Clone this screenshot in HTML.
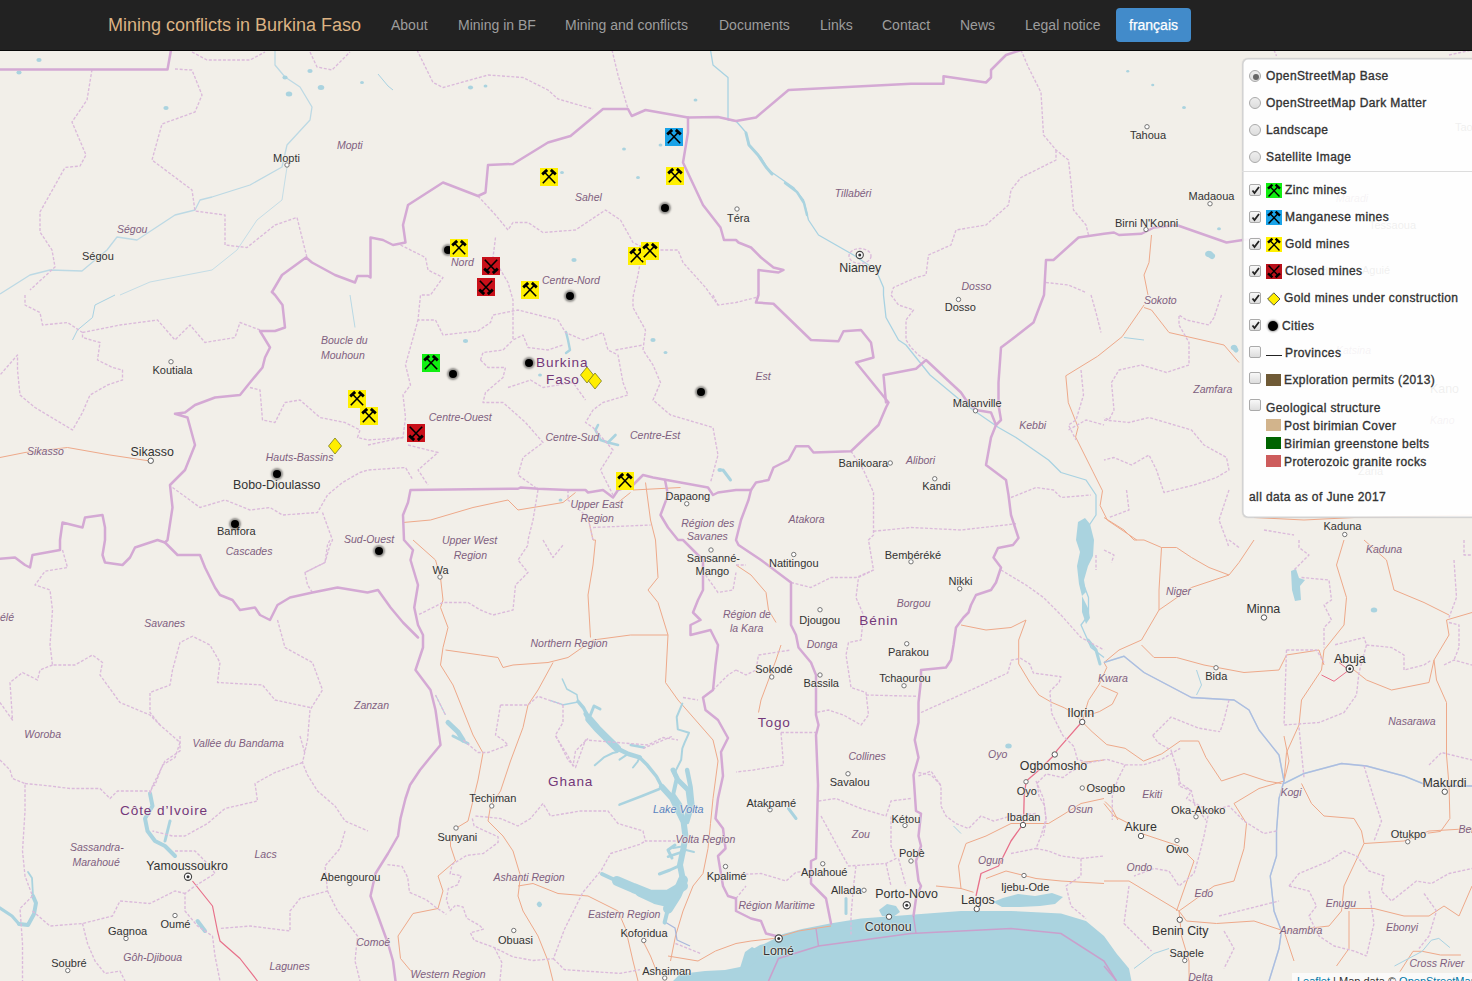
<!DOCTYPE html>
<html><head><meta charset="utf-8">
<style>
*{margin:0;padding:0;box-sizing:border-box}
html,body{width:1472px;height:981px;overflow:hidden;background:#f2efe9;font-family:"Liberation Sans",sans-serif}
#nav{position:absolute;left:0;top:0;width:1472px;height:51px;background:#222;border-bottom:1px solid #080808;z-index:10}
#nav span{position:absolute;top:0;line-height:50px;font-size:14px;color:#9d9d9d;white-space:nowrap}
#nav .brand{font-size:18px;color:#dcb283;left:108px}
#nav .btn{background:#428bca;color:#fff;-webkit-text-stroke:0.25px #fff;top:8px;line-height:34px;height:34px;border-radius:4px;padding:0 13px}
#map{position:absolute;left:0;top:0;width:1472px;height:981px;overflow:hidden}
#map svg{position:absolute;left:0;top:0}
#ctl{position:absolute;left:1242px;top:58px;width:240px;height:459.5px;background:rgba(255,255,255,0.92);border-radius:6px;box-shadow:inset 0 0 0 1.6px rgba(0,0,0,0.17),0 0 1px rgba(0,0,0,0.2);z-index:5;font-size:12px;color:#333}
#ctl .lt{position:absolute;font:12px/16px "Liberation Sans",sans-serif;letter-spacing:0.4px;-webkit-text-stroke:0.35px #333;color:#333;margin-top:0.75px;white-space:nowrap}
#ctl .rb{position:absolute;left:7px;width:12px;height:12px;border-radius:50%;border:1px solid #aaa;background:linear-gradient(#eee,#ddd)}
#ctl .cb{position:absolute;left:7px;width:12px;height:12px;border-radius:2px;border:1px solid #aaa;background:linear-gradient(#f8f8f8,#ddd)}
#ctl .ic{position:absolute;left:24px;width:16px;height:15px}
#map .lb{position:absolute;white-space:nowrap;line-height:16px;text-shadow:0 0 2px #f2efe9,0 0 2px #f2efe9,0 0 1px #f2efe9}
#map .mk{position:absolute}
#map .dot{position:absolute;width:8px;height:8px;border-radius:50%;background:#000;box-shadow:0 0 2px 2px rgba(0,0,0,0.4)}
#attr{position:absolute;left:1292px;top:973px;height:8px;padding:0 5px;background:rgba(255,255,255,0.7);font:11px/16px "Liberation Sans",sans-serif;color:#333;white-space:nowrap;z-index:6;overflow:hidden;width:200px}
</style></head><body>
<svg width="0" height="0" style="position:absolute"><defs>
<g id="hm">
<path d="M4.6 4.2 L15.2 15.3 M13.4 4.2 L2.8 15.3" stroke="#000" stroke-width="1.6" fill="none"/>
<path d="M2.2 6.4 L7.2 1.9 M15.8 6.4 L10.8 1.9" stroke="#000" stroke-width="2.8" stroke-linecap="butt" stroke-linejoin="round" fill="none"/>
</g>
</defs></svg>
<div id="nav">
<span class="brand">Mining conflicts in Burkina Faso</span>
<span style="left:391px">About</span>
<span style="left:458px">Mining in BF</span>
<span style="left:565px">Mining and conflicts</span>
<span style="left:719px">Documents</span>
<span style="left:820px">Links</span>
<span style="left:882px">Contact</span>
<span style="left:960px">News</span>
<span style="left:1025px">Legal notice</span>
<span class="btn" style="left:1116px">français</span>
</div>
<div id="map">
<svg width="1472" height="981" viewBox="0 0 1472 981">
<polygon points="673,981 680,974 705,971 725,970 745,966 749,958 753,949 760,945 764,944 772,940 783,934 802,929 830,923.5 861,918.5 911,914.75 961,911 1011,911 1061,913.5 1086,921 1104,936 1116.5,953.5 1129,968.5 1131.5,981 1131.5,981 673,981" fill="#aad3df"/>
<polyline points="0,457.5 25,452.5 67.5,447.5 110,455 150,461" fill="none" stroke="#eea98a" stroke-width="1.0" stroke-linejoin="round"/>
<polyline points="403,522.5 430.5,520 473,507.5 508,500 518,510 563,502.5 575.5,492.5" fill="none" stroke="#eea98a" stroke-width="1.0" stroke-linejoin="round"/>
<polyline points="645.5,482.5 650.5,520 655.5,540 658,577.5 648,590 658,602.5 668,635 665.5,682.5 678,700 695.5,720 713,740 718,761 713,798.5 710.5,823.5 708,848.5 703,873.5 693,886 683,911 675.5,936 670.5,961" fill="none" stroke="#eea98a" stroke-width="1.0" stroke-linejoin="round"/>
<polyline points="630.5,492.5 618,502.5" fill="none" stroke="#eea98a" stroke-width="1.0" stroke-linejoin="round"/>
<polyline points="633,490 680.5,487.5" fill="none" stroke="#eea98a" stroke-width="1.0" stroke-linejoin="round"/>
<polyline points="588,517.5 593,540 595.5,540 593,565 588,595 590.5,637.5" fill="none" stroke="#eea98a" stroke-width="1.0" stroke-linejoin="round"/>
<polyline points="413,540 435.5,560 440.5,577.5 443,600 440.5,607.5 448,627.5 443,647.5 440.5,665 453,685 463,710 473,735 483,753 478,780 468,821 455.5,828.5" fill="none" stroke="#eea98a" stroke-width="1.0" stroke-linejoin="round"/>
<polyline points="445.5,650 480.5,655 498,657.5 503,667.5 513,665 548,662.5 568,657.5 593,640 630.5,635 668,635" fill="none" stroke="#eea98a" stroke-width="1.0" stroke-linejoin="round"/>
<polyline points="553,662.5 538,690 528,705 523,727.5 510.5,761 500.5,791 490.5,806 488,821 503,836 513,851 520.5,876 518,896 523,911 538,936 548,961 553,981" fill="none" stroke="#eea98a" stroke-width="1.0" stroke-linejoin="round"/>
<polyline points="518,886 533,883.5 558,893.5 588,896 598,901 618,911 625.5,928.5 633,961 638,981" fill="none" stroke="#eea98a" stroke-width="1.0" stroke-linejoin="round"/>
<polyline points="643,941 650.5,956 655.5,968.5" fill="none" stroke="#eea98a" stroke-width="1.0" stroke-linejoin="round"/>
<polyline points="443,891 438,908.5 413,913.5 398,936 400.5,958.5 413,973.5" fill="none" stroke="#eea98a" stroke-width="1.0" stroke-linejoin="round"/>
<polyline points="443,891 438,876 455.5,861 450.5,846 450.5,836" fill="none" stroke="#eea98a" stroke-width="1.0" stroke-linejoin="round"/>
<polyline points="668,956 698,961 715.5,951 736,943.5 751,941 773.5,938.5 798.5,931 831,926" fill="none" stroke="#eea98a" stroke-width="1.0" stroke-linejoin="round"/>
<polyline points="736,565 751,575 766,592.5 768.5,610 776,622.5" fill="none" stroke="#eea98a" stroke-width="1.0" stroke-linejoin="round"/>
<polyline points="781,645 776,660 768.5,680 761,700 758.5,712.5" fill="none" stroke="#eea98a" stroke-width="1.0" stroke-linejoin="round"/>
<polyline points="961,625 986,630 1011,627.5 1026,620 1018.7,640 1018.7,663.9 1029.7,682.2 1038.9,695 1051.7,702.4 1064.6,707.9 1073.8,713.4 1082,721.7" fill="none" stroke="#eea98a" stroke-width="1.0" stroke-linejoin="round"/>
<polyline points="1144.1,304.9 1122.1,336.7 1097.6,356.3 1065.8,375.8 1068.3,402.7 1078.1,427.2 1075.6,437 1092.7,471.2 1102.5,490.8 1100.1,505.5 1107.4,520.2 1136.8,540" fill="none" stroke="#eea98a" stroke-width="1.0" stroke-linejoin="round"/>
<polyline points="1144,307.5 1151.5,310 1169,332.5 1224,345 1239,362.5" fill="none" stroke="#eea98a" stroke-width="1.0" stroke-linejoin="round"/>
<polyline points="1151.5,235 1149,262.5 1144,275 1148,295" fill="none" stroke="#eea98a" stroke-width="1.0" stroke-linejoin="round"/>
<polyline points="1254,517.5 1304,520 1354,517.5 1472,515" fill="none" stroke="#eea98a" stroke-width="1.0" stroke-linejoin="round"/>
<polyline points="1104,517.5 1124,530 1134,540 1144,540 1161.5,547.5 1176.5,547.5 1191.5,557.5 1209,567.5 1229,575 1239,562.5 1254,540" fill="none" stroke="#eea98a" stroke-width="1.0" stroke-linejoin="round"/>
<polyline points="1161.5,547.5 1159,590 1159,610 1141.5,640 1119,650 1104,662.5" fill="none" stroke="#eea98a" stroke-width="1.0" stroke-linejoin="round"/>
<polyline points="1159,610 1191.5,587.5 1229,575" fill="none" stroke="#eea98a" stroke-width="1.0" stroke-linejoin="round"/>
<polyline points="1141.5,645 1154,657.5 1176.5,657.5 1204,665 1244,672.5 1279,670 1286.5,655 1319,650 1324,665" fill="none" stroke="#eea98a" stroke-width="1.0" stroke-linejoin="round"/>
<polyline points="1344,540 1336.5,565 1346.5,597.5 1344,625 1324,650 1321.5,670 1301.5,700 1299,725 1286.5,752.5 1284,781" fill="none" stroke="#eea98a" stroke-width="1.0" stroke-linejoin="round"/>
<polyline points="1354,670 1366.5,680 1391.5,690 1429,682.5 1434,660 1449,635 1446.5,620 1472,612.5" fill="none" stroke="#eea98a" stroke-width="1.0" stroke-linejoin="round"/>
<polyline points="1364,540 1386.5,560 1394,590 1424,602.5 1449,615" fill="none" stroke="#eea98a" stroke-width="1.0" stroke-linejoin="round"/>
<polyline points="1434,660 1436.5,680 1446.5,702.5 1446.5,755 1449,785 1449.9,818.5 1440.6,831.4 1427.7,833.2" fill="none" stroke="#eea98a" stroke-width="1.0" stroke-linejoin="round"/>
<polyline points="1422.2,951.3 1440.6,955 1460.9,955" fill="none" stroke="#eea98a" stroke-width="1.0" stroke-linejoin="round"/>
<polyline points="1400,971.6 1413,951.3 1422.2,951.3" fill="none" stroke="#eea98a" stroke-width="1.0" stroke-linejoin="round"/>
<polyline points="1082,721.7 1092.1,731.7 1106.8,744.6 1125.1,748.3 1143.5,761.1 1161.8,753.8 1180.2,741 1198.5,741 1205.9,757.4 1221.5,781 1244,773.5 1266.5,781 1281.5,783.5" fill="none" stroke="#eea98a" stroke-width="1.0" stroke-linejoin="round"/>
<polyline points="1082,721.7 1088.4,700.6 1099.4,684 1106.8,667.5 1104,662.5" fill="none" stroke="#eea98a" stroke-width="1.0" stroke-linejoin="round"/>
<polyline points="1101.3,685.9 1117.8,693.2 1112.3,704.2 1099.4,711.6 1088.4,715.2" fill="none" stroke="#eea98a" stroke-width="1.0" stroke-linejoin="round"/>
<polyline points="1105,801.5 1112.3,808.8 1117.8,820" fill="none" stroke="#eea98a" stroke-width="1.0" stroke-linejoin="round"/>
<polyline points="1284,781 1259,788.5 1234,803.5 1246.5,823.5 1244,848.5 1234,881 1214,886 1179,911" fill="none" stroke="#eea98a" stroke-width="1.0" stroke-linejoin="round"/>
<polyline points="1284,736 1289,761 1284,781" fill="none" stroke="#eea98a" stroke-width="1.0" stroke-linejoin="round"/>
<polyline points="1301.5,783.5 1311.5,803.5 1324,816 1354,818.5 1361.5,831 1364,843.5 1404,841 1429,831 1472,828.5" fill="none" stroke="#eea98a" stroke-width="1.0" stroke-linejoin="round"/>
<polyline points="1364,843.5 1344,886 1341.5,911 1329,926 1284,931 1254,921 1216.5,923.5 1186.5,921 1179,911 1154,896 1129,881 1104,881" fill="none" stroke="#eea98a" stroke-width="1.0" stroke-linejoin="round"/>
<polyline points="1179,911 1181.5,936 1189,961 1189,981" fill="none" stroke="#eea98a" stroke-width="1.0" stroke-linejoin="round"/>
<polyline points="1176.5,911 1194,861 1179,846 1141.5,833.5" fill="none" stroke="#eea98a" stroke-width="1.0" stroke-linejoin="round"/>
<polyline points="1344,908.5 1374,908.5 1404,916 1429,916 1444,906 1459,916 1472,886" fill="none" stroke="#eea98a" stroke-width="1.0" stroke-linejoin="round"/>
<polyline points="1349,911 1349,948.5 1336.5,966" fill="none" stroke="#eea98a" stroke-width="1.0" stroke-linejoin="round"/>
<polyline points="1284,931 1294,961" fill="none" stroke="#eea98a" stroke-width="1.0" stroke-linejoin="round"/>
<polyline points="1104,803.5 1114,816 1129,823.5" fill="none" stroke="#eea98a" stroke-width="1.0" stroke-linejoin="round"/>
<polyline points="936,886 961,888.5 973.5,892.25" fill="none" stroke="#eea98a" stroke-width="1.0" stroke-linejoin="round"/>
<polyline points="961,888.5 958.5,866 966,843.5 986,836 1011,823.5 1048.5,823.5 1061,816 1081,803.5 1104,798.5" fill="none" stroke="#eea98a" stroke-width="1.0" stroke-linejoin="round"/>
<polyline points="986,878.5 1006,871 1036,878.5 1061,881 1104,883.5" fill="none" stroke="#eea98a" stroke-width="1.0" stroke-linejoin="round"/>
<polyline points="1081,762.5 1104,760" fill="none" stroke="#eea98a" stroke-width="1.0" stroke-linejoin="round"/>
<polyline points="976,896 981,873.5 998.5,866 1006,851 1011,841 1023.5,823.5 1024.2,796 1026.1,781.3 1040.7,768.4 1054.5,754.7 1057.2,750.1 1070.1,735.4 1082,721.7" fill="none" stroke="#e8708a" stroke-width="1.3" stroke-linejoin="round"/>
<polyline points="192.5,881 212.5,906 217.5,931 220,941 240,958.5 257.5,981" fill="none" stroke="#e8708a" stroke-width="1.2" stroke-linejoin="round"/>
<polyline points="1321.5,675 1334,681.25 1349,670 1339,662.5" fill="none" stroke="#e8708a" stroke-width="1.0" stroke-linejoin="round"/>
<polyline points="665,922 675,928 677,940 690,946" fill="none" stroke="#a9b8dc" stroke-width="1.3" stroke-linejoin="round"/>
<polyline points="550,700.3 563.5,704.8 578,702" fill="none" stroke="#a8d2e2" stroke-width="1.4" stroke-linejoin="round"/>
<polyline points="1394.5,966 1422.2,951.3 1431.4,940.2 1438.8,938.4 1449.9,947.6" fill="none" stroke="#a8d2e2" stroke-width="1.0" stroke-linejoin="round"/>
<polyline points="0,294 30,275 50,270 82,271 107,250 117,237 137,240 175,215 195,210 200,200 212,197 250,185 282,167 287,145 310,120 312,107 300,87 285,77 275,65 275,50" fill="none" stroke="#bcd9e4" stroke-width="1.3" stroke-linejoin="round"/>
<polyline points="120,295 150,282 212,270 237,250 257,220 282,200 287,167" fill="none" stroke="#c4dde6" stroke-width="1.0" stroke-linejoin="round"/>
<polyline points="115,295 95,305 92.5,317.5 77.5,330 72.5,340" fill="none" stroke="#a8d2e2" stroke-width="1.0" stroke-linejoin="round"/>
<polyline points="350,295 355,327.5" fill="none" stroke="#a8d2e2" stroke-width="0.8" stroke-linejoin="round"/>
<polyline points="378,74 388,86 393,90" fill="none" stroke="#a8d2e2" stroke-width="1.0" stroke-linejoin="round"/>
<polyline points="710.5,50 713,65 728,77.5 728,100 728,120 736,121 746,132.5 748.5,145 761,157.5 768.5,170 793.5,187.5 803.5,200 808.5,220 818.5,235 836,245 853.5,255 876,270 883.5,287.5 883.5,295 886,317.5 898.5,340 906,345 930,375 966,405 998.5,427.5 1016,437.5 1048.5,460 1061,472.5 1086,480 1096,495 1096,515 1086,530" fill="none" stroke="#a8d2e2" stroke-width="1.3" stroke-linejoin="round"/>
<polyline points="1081,540 1081,577.5 1088.5,597.5 1088.5,615 1081,625 1091,647.5 1104,657.5" fill="none" stroke="#a8d2e2" stroke-width="1.3" stroke-linejoin="round"/>
<polyline points="1104,662.5 1124,656.25 1144,672.5 1191.5,697.5 1234,700 1249,710 1259,730 1279,755 1284,781 1279,798.5 1276.5,831 1276.5,856 1270.25,876 1274,911 1281.5,931 1279,948.5 1269,981" fill="none" stroke="#a8d2e2" stroke-width="1.4" stroke-linejoin="round"/>
<polyline points="1284,783.5 1304,773.5 1341.5,763.5 1366.5,766 1404,776 1429,786 1472,786" fill="none" stroke="#a8d2e2" stroke-width="1.4" stroke-linejoin="round"/>
<polyline points="1196.5,670 1201.5,685 1196.5,695" fill="none" stroke="#a8d2e2" stroke-width="1.0" stroke-linejoin="round"/>
<polyline points="1134,968.5 1154,953.5 1169,948.5" fill="none" stroke="#a8d2e2" stroke-width="1.0" stroke-linejoin="round"/>
<polyline points="1124,337.5 1144,340" fill="none" stroke="#a8d2e2" stroke-width="1.0" stroke-linejoin="round"/>
<polyline points="953.5,826 961,833.5" fill="none" stroke="#a8d2e2" stroke-width="1.0" stroke-linejoin="round"/>
<polyline points="435.5,695 445.5,715" fill="none" stroke="#a8d2e2" stroke-width="1.0" stroke-linejoin="round"/>
<polyline points="673.2,770 676.7,778.7 673.2,794.3 680.2,804.7 683.6,822" fill="none" stroke="#aad3df" stroke-width="4" stroke-linejoin="round" stroke-linecap="round"/>
<polyline points="687.1,770 690.6,787.3 692.3,804.7 687.1,822" fill="none" stroke="#aad3df" stroke-width="4.5" stroke-linejoin="round" stroke-linecap="round"/>
<polyline points="659.4,874 670,870 680.2,865.4" fill="none" stroke="#aad3df" stroke-width="3" stroke-linejoin="round" stroke-linecap="round"/>
<polyline points="668,856.7 676,854 683.6,851.5" fill="none" stroke="#aad3df" stroke-width="2.5" stroke-linejoin="round" stroke-linecap="round"/>
<polyline points="673.2,848 683.6,846.3" fill="none" stroke="#aad3df" stroke-width="2" stroke-linejoin="round" stroke-linecap="round"/>
<polyline points="686,850 694,852" fill="none" stroke="#aad3df" stroke-width="2" stroke-linejoin="round" stroke-linecap="round"/>
<polyline points="633,767.5 637.4,762 639.7,757.4" fill="none" stroke="#aad3df" stroke-width="2" stroke-linejoin="round" stroke-linecap="round"/>
<polyline points="619.5,759.7 626.2,755.2" fill="none" stroke="#aad3df" stroke-width="2" stroke-linejoin="round" stroke-linecap="round"/>
<polyline points="640,893 655,900 668,903" fill="none" stroke="#aad3df" stroke-width="8" stroke-linejoin="round" stroke-linecap="round"/>
<polyline points="1088,640 1096,650 1100,664" fill="none" stroke="#aad3df" stroke-width="3" stroke-linejoin="round" stroke-linecap="round"/>
<polyline points="562.3,679 566.8,689 576.9,694.7 578,701.4" fill="none" stroke="#aad3df" stroke-width="1.5" stroke-linejoin="round" stroke-linecap="round"/>
<polyline points="578,701.4 583.6,708 589.2,719.3" fill="none" stroke="#aad3df" stroke-width="3.5" stroke-linejoin="round" stroke-linecap="round"/>
<polyline points="589.2,719.3 597,728.3 606,737.3 617.3,748.5" fill="none" stroke="#aad3df" stroke-width="7.5" stroke-linejoin="round" stroke-linecap="round"/>
<polyline points="586,714 589.2,719.3" fill="none" stroke="#aad3df" stroke-width="5" stroke-linejoin="round" stroke-linecap="round"/>
<polyline points="617.3,748.5 628.5,754 639.7,757.4" fill="none" stroke="#aad3df" stroke-width="4.5" stroke-linejoin="round" stroke-linecap="round"/>
<polyline points="639.7,757.4 647.5,765.3 656.5,776.5 662,787 670,795" fill="none" stroke="#aad3df" stroke-width="3.5" stroke-linejoin="round" stroke-linecap="round"/>
<polyline points="673,770 678,780 688,790 690,805 685,822" fill="none" stroke="#aad3df" stroke-width="5" stroke-linejoin="round" stroke-linecap="round"/>
<polyline points="662,787 672,798 683.6,822 685.4,836 683.6,848 680,865 683,880" fill="none" stroke="#aad3df" stroke-width="6" stroke-linejoin="round" stroke-linecap="round"/>
<polyline points="675,845 668,850 672,858" fill="none" stroke="#aad3df" stroke-width="3" stroke-linejoin="round" stroke-linecap="round"/>
<polyline points="683,880 676.7,894.8 668,908.7" fill="none" stroke="#aad3df" stroke-width="10" stroke-linejoin="round" stroke-linecap="round"/>
<polyline points="668,908.7 664.6,922.6" fill="none" stroke="#aad3df" stroke-width="4" stroke-linejoin="round" stroke-linecap="round"/>
<polyline points="602,874 617,881" fill="none" stroke="#aad3df" stroke-width="4" stroke-linejoin="round" stroke-linecap="round"/>
<polyline points="617,881 633.4,888 650.7,894.8 668,894.8 683,886" fill="none" stroke="#aad3df" stroke-width="10" stroke-linejoin="round" stroke-linecap="round"/>
<polyline points="590,716 594,706 600,709" fill="none" stroke="#aad3df" stroke-width="3" stroke-linejoin="round" stroke-linecap="round"/>
<polyline points="594.8,765.3 603.8,757.4 612.8,753 617.3,752" fill="none" stroke="#aad3df" stroke-width="2" stroke-linejoin="round" stroke-linecap="round"/>
<polyline points="630.7,745 644.2,747.4" fill="none" stroke="#aad3df" stroke-width="2.5" stroke-linejoin="round" stroke-linecap="round"/>
<polyline points="619.5,804.7 642,796 659.4,789" fill="none" stroke="#aad3df" stroke-width="2.5" stroke-linejoin="round" stroke-linecap="round"/>
<polyline points="682.3,703.6 676.7,717 677.8,729.4 689,732.8 684.5,742.9 682.3,748.5 681.2,759.7 675.6,770.9 676.7,780" fill="none" stroke="#aad3df" stroke-width="2" stroke-linejoin="round" stroke-linecap="round"/>
<polyline points="448,722.5 458,732 463,740" fill="none" stroke="#aad3df" stroke-width="5" stroke-linejoin="round" stroke-linecap="round"/>
<polyline points="453,736 468,743.5" fill="none" stroke="#aad3df" stroke-width="3" stroke-linejoin="round" stroke-linecap="round"/>
<polyline points="150,793.5 152.5,806 145,818.5 147.5,831 155,841 165,846 175,856" fill="none" stroke="#aad3df" stroke-width="4" stroke-linejoin="round" stroke-linecap="round"/>
<polyline points="170,821 165,841" fill="none" stroke="#aad3df" stroke-width="3" stroke-linejoin="round" stroke-linecap="round"/>
<polyline points="0,908 12,916 19,924" fill="none" stroke="#aad3df" stroke-width="3.2" stroke-linejoin="round" stroke-linecap="round"/>
<polyline points="19,924 28,925 34,914 36,903 33,896" fill="none" stroke="#aad3df" stroke-width="4" stroke-linejoin="round" stroke-linecap="round"/>
<polyline points="33,896 32,878 28,872" fill="none" stroke="#aad3df" stroke-width="1.8" stroke-linejoin="round" stroke-linecap="round"/>
<polyline points="197.5,921 205,931" fill="none" stroke="#aad3df" stroke-width="4" stroke-linejoin="round" stroke-linecap="round"/>
<polyline points="598,425 595.5,430 600.5,440 608,442.5 615.5,435" fill="none" stroke="#aad3df" stroke-width="2.6" stroke-linejoin="round" stroke-linecap="round"/>
<polyline points="608,442.5 618,445" fill="none" stroke="#aad3df" stroke-width="2.6" stroke-linejoin="round" stroke-linecap="round"/>
<polyline points="566,332 568,340 570,350 566,353" fill="none" stroke="#aad3df" stroke-width="2.4" stroke-linejoin="round" stroke-linecap="round"/>
<polyline points="723,470 730.5,480" fill="none" stroke="#aad3df" stroke-width="3" stroke-linejoin="round" stroke-linecap="round"/>
<polyline points="746,133 749,145 758,155 766,167 772,174" fill="none" stroke="#aad3df" stroke-width="3" stroke-linejoin="round" stroke-linecap="round"/>
<polyline points="785,183 797,192 804,203 807,215" fill="none" stroke="#aad3df" stroke-width="2.5" stroke-linejoin="round" stroke-linecap="round"/>
<polyline points="846,898.5 846,913.5" fill="none" stroke="#aad3df" stroke-width="3" stroke-linejoin="round" stroke-linecap="round"/>
<polyline points="788.5,808.5 796,818.5" fill="none" stroke="#aad3df" stroke-width="3" stroke-linejoin="round" stroke-linecap="round"/>
<polyline points="1209,254 1212,256" fill="none" stroke="#aad3df" stroke-width="6" stroke-linejoin="round" stroke-linecap="round"/>
<polyline points="1234,347.5 1236,350" fill="none" stroke="#aad3df" stroke-width="5" stroke-linejoin="round" stroke-linecap="round"/>
<polyline points="539.25,904.25 539.5,904.5" fill="none" stroke="#aad3df" stroke-width="5" stroke-linejoin="round" stroke-linecap="round"/>
<polygon points="1078,522 1085,518 1090,524 1094,540 1093,556 1088,566 1084,580 1086,592 1082,596 1079,584 1077,566 1080,552 1076,540" fill="#aad3df"/>
<polygon points="1291,571 1296,569 1299,578 1305,580 1300,586 1301,600 1295,601 1292,590" fill="#aad3df"/>
<polygon points="1082,596 1088,608 1090,618 1086,624 1082,612" fill="#aad3df"/>
<polygon points="993,902 1003,898 1018,894 1035,896 1052,893 1063,897 1055,904 1040,906 1020,907 1002,907" fill="#aad3df"/>
<polygon points="879,910 887,904 896,906 900,912 893,917 882,916" fill="#aad3df"/>
<polygon points="740,968 745,952 752,947 758,950 756,962 748,968" fill="#aad3df"/>
<polyline points="1104,662.5 1124,656.25 1144,672.5 1191.5,697.5 1234,700 1249,710 1259,730 1279,755 1284,781 1279,798.5 1276.5,831 1276.5,856 1270.25,876 1274,911 1281.5,931 1279,948.5 1269,981" fill="none" stroke="#b0aee0" stroke-width="1.3" stroke-opacity="0.6"/>
<polyline points="1284,783.5 1304,773.5 1341.5,763.5 1366.5,766 1404,776 1429,786 1472,786" fill="none" stroke="#b0aee0" stroke-width="1.3" stroke-opacity="0.6"/>
<ellipse cx="289" cy="94" rx="3.25" ry="2.5" fill="#aad3df"/>
<ellipse cx="321" cy="87.5" rx="3.25" ry="2.5" fill="#aad3df"/>
<ellipse cx="39" cy="60" rx="2.6" ry="2" fill="#aad3df"/>
<ellipse cx="19" cy="72.5" rx="2.6" ry="2" fill="#aad3df"/>
<ellipse cx="166" cy="108" rx="2.6" ry="2" fill="#aad3df"/>
<ellipse cx="285" cy="77.5" rx="2.6" ry="2" fill="#aad3df"/>
<ellipse cx="310" cy="71" rx="2.6" ry="2" fill="#aad3df"/>
<ellipse cx="362" cy="82.5" rx="1.9500000000000002" ry="1.5" fill="#aad3df"/>
<ellipse cx="470.5" cy="87.5" rx="2.6" ry="2" fill="#aad3df"/>
<ellipse cx="485.5" cy="86" rx="1.9500000000000002" ry="1.5" fill="#aad3df"/>
<ellipse cx="562" cy="172.5" rx="1.9500000000000002" ry="1.5" fill="#aad3df"/>
<ellipse cx="624" cy="149" rx="1.9500000000000002" ry="1.5" fill="#aad3df"/>
<ellipse cx="660.5" cy="145" rx="1.9500000000000002" ry="1.5" fill="#aad3df"/>
<ellipse cx="638" cy="177.5" rx="1.9500000000000002" ry="1.5" fill="#aad3df"/>
<ellipse cx="695.5" cy="100" rx="1.9500000000000002" ry="1.5" fill="#aad3df"/>
<ellipse cx="465.5" cy="341" rx="2.6" ry="2" fill="#aad3df"/>
<ellipse cx="653" cy="340" rx="2.6" ry="2" fill="#aad3df"/>
<ellipse cx="665.5" cy="352.5" rx="1.9500000000000002" ry="1.5" fill="#aad3df"/>
<ellipse cx="560.5" cy="500" rx="1.9500000000000002" ry="1.5" fill="#aad3df"/>
<ellipse cx="1374" cy="610" rx="3.25" ry="2.5" fill="#aad3df"/>
<ellipse cx="1008.5" cy="746" rx="3.25" ry="2.5" fill="#aad3df"/>
<ellipse cx="1209" cy="254" rx="3.9000000000000004" ry="3" fill="#aad3df"/>
<ellipse cx="1234" cy="347.5" rx="3.25" ry="2.5" fill="#aad3df"/>
<ellipse cx="574" cy="260" rx="2.6" ry="2" fill="#aad3df"/>
<ellipse cx="540" cy="375" rx="1.9500000000000002" ry="1.5" fill="#aad3df"/>
<ellipse cx="720" cy="470" rx="2.6" ry="2" fill="#aad3df"/>
<ellipse cx="1127.75" cy="71.25" rx="1.56" ry="1.2" fill="#aad3df"/>
<ellipse cx="1152.75" cy="85" rx="1.56" ry="1.2" fill="#aad3df"/>
<ellipse cx="1184" cy="107.5" rx="1.9500000000000002" ry="1.5" fill="#aad3df"/>
<ellipse cx="1219" cy="228.75" rx="1.9500000000000002" ry="1.5" fill="#aad3df"/>
<polyline points="472.3,818.5 474.1,825.8 498.1,836.9 498.1,842.4 483.3,853.5 466.7,855.4 452,864.6 450.1,873.8 461.2,875.6 457.5,884.9 448.3,888.6 446.4,899.6 450.1,910.7 455.6,905.2 463,907 466.7,918.1 479.6,925.5 483.3,929.2 470.4,932.8 474.1,940.2 494.4,947.6 512.8,956.8 533.1,960.5 553.4,958.7 564.5,929.2 582.9,892.3 601.4,870.1 610.6,853.5 640,844.3 645.5,841" fill="none" stroke="#dbbadb" stroke-width="1.35" stroke-dasharray="3 1.7" stroke-linejoin="round"/>
<polyline points="494.4,947.6 501.8,962.4 499.9,981" fill="none" stroke="#dbbadb" stroke-width="1.35" stroke-dasharray="3 1.7" stroke-linejoin="round"/>
<polyline points="553.4,958.7 564.5,969.7 619.9,973.4 640,969.7" fill="none" stroke="#dbbadb" stroke-width="1.35" stroke-dasharray="3 1.7" stroke-linejoin="round"/>
<polyline points="387.4,864.6 402.1,866.4 407.7,877.5 409.5,892.3 426.1,899.6 435.4,907 446.4,914.4" fill="none" stroke="#dbbadb" stroke-width="1.35" stroke-dasharray="3 1.7" stroke-linejoin="round"/>
<polyline points="175,69 192,70 202,95 195,112 162,124 152,160 192,190 195,211 225,215 225,245 247,247.5 275,225 297,217.5 307,257.5" fill="none" stroke="#dbbadb" stroke-width="1.35" stroke-dasharray="3 1.7" stroke-linejoin="round"/>
<polyline points="192,52 207,60 250,60 265,52" fill="none" stroke="#dbbadb" stroke-width="1.35" stroke-dasharray="3 1.7" stroke-linejoin="round"/>
<polyline points="92,69.5 87,100 72,122 86,155 80,166 65,167.5 40,212 40,232 52,250 55,267 30,290" fill="none" stroke="#dbbadb" stroke-width="1.35" stroke-dasharray="3 1.7" stroke-linejoin="round"/>
<polyline points="310,52 317,67 332,70 350,52" fill="none" stroke="#dbbadb" stroke-width="1.35" stroke-dasharray="3 1.7" stroke-linejoin="round"/>
<polyline points="417,50 433,82.5 443,87.5 488,75 523,77.5 548,90 558,99 593,109" fill="none" stroke="#dbbadb" stroke-width="1.35" stroke-dasharray="3 1.7" stroke-linejoin="round"/>
<polyline points="612,50 618,75 628,109" fill="none" stroke="#dbbadb" stroke-width="1.35" stroke-dasharray="3 1.7" stroke-linejoin="round"/>
<polyline points="478,196 495.5,215 508,230 513,222.5 528,222.5 543,232.5 575.5,230 605.5,210 620.5,220 633,242.5 643,247.5 638,275 633,297 633,307.5 645.5,330 643,350 653,365 660.5,382.5 653,400 670.5,415 713,427.5 718,455 710.5,482.5" fill="none" stroke="#dbbadb" stroke-width="1.35" stroke-dasharray="3 1.7" stroke-linejoin="round"/>
<polyline points="660.5,250 678,250 683,262.5 705.5,287.5 718,305 736,302.5 756,297.5" fill="none" stroke="#dbbadb" stroke-width="1.35" stroke-dasharray="3 1.7" stroke-linejoin="round"/>
<polyline points="400.5,245 425.5,257.5 428,270 443,277.5 430.5,295 420.5,295 418,320 435.5,320 443,335 478,331 490.5,322.5 493,315 518,310 558,320 565.5,332.5 583,340 603,332.5 608,350 618,355 623,382.5 628,395 603,402.5 593,410 585.5,422.5 593,427.5 613,450 600.5,470 613,495" fill="none" stroke="#dbbadb" stroke-width="1.35" stroke-dasharray="3 1.7" stroke-linejoin="round"/>
<polyline points="495.5,237.5 493,257.5 508,282.5 513,300 513,340 523,335 528,347.5 548,350 563,345" fill="none" stroke="#dbbadb" stroke-width="1.35" stroke-dasharray="3 1.7" stroke-linejoin="round"/>
<polyline points="25,295 25,305 40,312.5 42.5,325 67.5,322.5 82.5,332.5 82.5,337.5 100,342.5 97.5,360 112.5,367.5 122.5,370 122.5,380 107.5,385 90,395 82.5,412.5 72.5,430 35,407.5 20,395 17.5,370 17.5,355 0,375" fill="none" stroke="#dbbadb" stroke-width="1.35" stroke-dasharray="3 1.7" stroke-linejoin="round"/>
<polyline points="82.5,332.5 120,325 157.5,320 175,340 190,325 205,342.5 235,337.5 240,322.5 260,330" fill="none" stroke="#dbbadb" stroke-width="1.35" stroke-dasharray="3 1.7" stroke-linejoin="round"/>
<polyline points="250,387.5 260,390 262.5,420 275,422.5 285,402.5 300,400 320,417.5 345,422.5 360,430 357.5,437.5 368,440 403,437.5 405.5,417.5 403,395 410.5,385 405.5,365 418,320" fill="none" stroke="#dbbadb" stroke-width="1.35" stroke-dasharray="3 1.7" stroke-linejoin="round"/>
<polyline points="172.5,487.5 200,507.5 225,500 250,510 270,507.5 282.5,515 317.5,512.5 327.5,495 342.5,482.5 360,472.5 368,470 405.5,467.5 413,480" fill="none" stroke="#dbbadb" stroke-width="1.35" stroke-dasharray="3 1.7" stroke-linejoin="round"/>
<polyline points="322.5,512.5 332.5,540 330,545 325,562.5 305,572.5 307.5,585 312.5,592.5" fill="none" stroke="#dbbadb" stroke-width="1.35" stroke-dasharray="3 1.7" stroke-linejoin="round"/>
<polyline points="368,445 403,437.5" fill="none" stroke="#dbbadb" stroke-width="1.35" stroke-dasharray="3 1.7" stroke-linejoin="round"/>
<polyline points="408,445 438,452.5 418,470 428,485" fill="none" stroke="#dbbadb" stroke-width="1.35" stroke-dasharray="3 1.7" stroke-linejoin="round"/>
<polyline points="480.5,360 483,352.5 503,350 513,340" fill="none" stroke="#dbbadb" stroke-width="1.35" stroke-dasharray="3 1.7" stroke-linejoin="round"/>
<polyline points="480.5,360 488,367.5 505.5,367.5 503,377.5 485.5,392.5 483,402.5 503,402.5 525.5,422.5 543,442.5 523,457.5 518,475 535.5,487.5" fill="none" stroke="#dbbadb" stroke-width="1.35" stroke-dasharray="3 1.7" stroke-linejoin="round"/>
<polyline points="508,387.5 530.5,380 543,387.5 573,382.5 585.5,400" fill="none" stroke="#dbbadb" stroke-width="1.35" stroke-dasharray="3 1.7" stroke-linejoin="round"/>
<polyline points="615.5,350 643,345" fill="none" stroke="#dbbadb" stroke-width="1.35" stroke-dasharray="3 1.7" stroke-linejoin="round"/>
<polyline points="713,295 718,305" fill="none" stroke="#dbbadb" stroke-width="1.35" stroke-dasharray="3 1.7" stroke-linejoin="round"/>
<polyline points="538,490 533,520 528,540 528,545 518,560 528,572.5 515.5,585 513,610 493,615 480.5,610 468,602.5 443,602.5 418,615" fill="none" stroke="#dbbadb" stroke-width="1.35" stroke-dasharray="3 1.7" stroke-linejoin="round"/>
<polyline points="568,490 568,500 588,517.5 593,540" fill="none" stroke="#dbbadb" stroke-width="1.35" stroke-dasharray="3 1.7" stroke-linejoin="round"/>
<polyline points="593,527.5 650.5,525" fill="none" stroke="#dbbadb" stroke-width="1.35" stroke-dasharray="3 1.7" stroke-linejoin="round"/>
<polyline points="543,540 553,557.5 563,545" fill="none" stroke="#dbbadb" stroke-width="1.35" stroke-dasharray="3 1.7" stroke-linejoin="round"/>
<polyline points="891,295 898.5,305 913.5,310 906,320 906,340 911,347.5 918.5,355 926,360" fill="none" stroke="#dbbadb" stroke-width="1.35" stroke-dasharray="3 1.7" stroke-linejoin="round"/>
<polyline points="851,451.25 863.5,470 873.5,492.5 873.5,535 868.5,540 873.5,570 858.5,577.5 856,597.5 863.5,615 861,640 848.5,642.5 846,655 851,687.5 866,692.5 868.5,715 861,725 843.5,715 828.5,710 816,712.5" fill="none" stroke="#dbbadb" stroke-width="1.35" stroke-dasharray="3 1.7" stroke-linejoin="round"/>
<polyline points="873.5,531.25 911,527.5 961,530 1016,523.75" fill="none" stroke="#dbbadb" stroke-width="1.35" stroke-dasharray="3 1.7" stroke-linejoin="round"/>
<polyline points="1011,497.5 1036,487.5 1053.5,490 1061,497.5 1091,495" fill="none" stroke="#dbbadb" stroke-width="1.35" stroke-dasharray="3 1.7" stroke-linejoin="round"/>
<polyline points="1068.5,430 1086,420 1104,425" fill="none" stroke="#dbbadb" stroke-width="1.35" stroke-dasharray="3 1.7" stroke-linejoin="round"/>
<polyline points="1081,370 1083.5,395 1076,420 1068.5,425 1076,440" fill="none" stroke="#dbbadb" stroke-width="1.35" stroke-dasharray="3 1.7" stroke-linejoin="round"/>
<polyline points="1091,295 1096,312.5 1101,332.5" fill="none" stroke="#dbbadb" stroke-width="1.35" stroke-dasharray="3 1.7" stroke-linejoin="round"/>
<polyline points="1021,50 1028.5,67.5 1041,92.5 1043.5,135 1056,150 1068.5,160 1071,182.5 1073.5,210 1086,225 1088.5,235" fill="none" stroke="#dbbadb" stroke-width="1.35" stroke-dasharray="3 1.7" stroke-linejoin="round"/>
<polyline points="1056,150 1056,160 1021,177.5 1011,190 1008.5,205 986,225 956,230 951,245 928.5,255 926,275 916,277.5 893.5,287.5 891,295" fill="none" stroke="#dbbadb" stroke-width="1.35" stroke-dasharray="3 1.7" stroke-linejoin="round"/>
<polyline points="1046,282.5 1068.5,285 1086,292.5" fill="none" stroke="#dbbadb" stroke-width="1.35" stroke-dasharray="3 1.7" stroke-linejoin="round"/>
<polyline points="1221.5,295 1214,317.5 1209,325 1186.5,320 1179,315 1179,325 1189,342.5 1189,365 1166.5,372.5 1141.5,365 1119,370 1111.5,382.5 1114,410 1109,420 1104,417.5" fill="none" stroke="#dbbadb" stroke-width="1.35" stroke-dasharray="3 1.7" stroke-linejoin="round"/>
<polyline points="1104,420 1129,422.5 1149,417.5 1191.5,430 1204,445 1226.5,457.5 1229,470 1216.5,477.5 1194,485 1164,492.5 1156.5,470 1149,455 1131.5,465 1114,457.5 1104,460" fill="none" stroke="#dbbadb" stroke-width="1.35" stroke-dasharray="3 1.7" stroke-linejoin="round"/>
<polyline points="1126.5,490 1129,510 1109,517.5" fill="none" stroke="#dbbadb" stroke-width="1.35" stroke-dasharray="3 1.7" stroke-linejoin="round"/>
<polyline points="1229,490 1219,520 1226.5,540 1229,547.5" fill="none" stroke="#dbbadb" stroke-width="1.35" stroke-dasharray="3 1.7" stroke-linejoin="round"/>
<polyline points="1264,530 1294,535" fill="none" stroke="#dbbadb" stroke-width="1.35" stroke-dasharray="3 1.7" stroke-linejoin="round"/>
<polyline points="1274,50 1276.5,56" fill="none" stroke="#dbbadb" stroke-width="1.35" stroke-dasharray="3 1.7" stroke-linejoin="round"/>
<polyline points="62.5,550 67.5,567.5 45,571.25 35,585 50,590 52.5,610 50,645 52.5,665 75,665 92.5,655 102.5,662.5 100,675 120,702.5 150,715 160,725 180,742.5 175,757.5 162.5,765 155,785 152.5,786 150,793.5" fill="none" stroke="#dbbadb" stroke-width="1.35" stroke-dasharray="3 1.7" stroke-linejoin="round"/>
<polyline points="52.5,665 40,670 37.5,680 22.5,672.5 10,682.5 12.5,720 0,702.5" fill="none" stroke="#dbbadb" stroke-width="1.35" stroke-dasharray="3 1.7" stroke-linejoin="round"/>
<polyline points="277.5,620 285,647.5 312.5,662.5 322.5,690 310,710 307.5,740 302.5,762.5 307.5,775 317.5,791 335,806 345,821 368,831" fill="none" stroke="#dbbadb" stroke-width="1.35" stroke-dasharray="3 1.7" stroke-linejoin="round"/>
<polyline points="310,707.5 275,700 262.5,685 217.5,682.5 220,662.5 210,645 192.5,636.25 180,642.5 172.5,670 170,685 150,692.5 150,712.5 160,725" fill="none" stroke="#dbbadb" stroke-width="1.35" stroke-dasharray="3 1.7" stroke-linejoin="round"/>
<polyline points="302.5,762.5 275,772.5 255,783.5 257.5,801 225,808.5 207.5,823.5 185,836 172.5,836 152.5,831" fill="none" stroke="#dbbadb" stroke-width="1.35" stroke-dasharray="3 1.7" stroke-linejoin="round"/>
<polyline points="305,572.5 325,562.5 327.5,545 330,540" fill="none" stroke="#dbbadb" stroke-width="1.35" stroke-dasharray="3 1.7" stroke-linejoin="round"/>
<polyline points="0,760 10,770 12.5,778.5 25,783.5 25,811 22.5,851 25,876 32.5,896 20,908.5 22.5,943.5 22.5,981" fill="none" stroke="#dbbadb" stroke-width="1.35" stroke-dasharray="3 1.7" stroke-linejoin="round"/>
<polyline points="500.5,705 528,705 538,696.25 563,705" fill="none" stroke="#dbbadb" stroke-width="1.35" stroke-dasharray="3 1.7" stroke-linejoin="round"/>
<polyline points="500.5,705 495.5,735 503,740 508,745 488,752.5 478,752.5 463,740" fill="none" stroke="#dbbadb" stroke-width="1.35" stroke-dasharray="3 1.7" stroke-linejoin="round"/>
<polyline points="563,705 563,722.5 555.5,735 568,760 575.5,767.5 585.5,740 648,745 663,737.5 678,740" fill="none" stroke="#dbbadb" stroke-width="1.35" stroke-dasharray="3 1.7" stroke-linejoin="round"/>
<polyline points="683,697.5 698,700" fill="none" stroke="#dbbadb" stroke-width="1.35" stroke-dasharray="3 1.7" stroke-linejoin="round"/>
<polyline points="705.5,575 718,592.5 733,590 736,572.5" fill="none" stroke="#dbbadb" stroke-width="1.35" stroke-dasharray="3 1.7" stroke-linejoin="round"/>
<polyline points="713,690 728,675 736,670" fill="none" stroke="#dbbadb" stroke-width="1.35" stroke-dasharray="3 1.7" stroke-linejoin="round"/>
<polyline points="435.5,695 445.5,715" fill="none" stroke="#dbbadb" stroke-width="1.35" stroke-dasharray="3 1.7" stroke-linejoin="round"/>
<polyline points="791,582.5 811,587.5 831,577.5 856,577.5 873.5,570" fill="none" stroke="#dbbadb" stroke-width="1.35" stroke-dasharray="3 1.7" stroke-linejoin="round"/>
<polyline points="866,695 916,696.25" fill="none" stroke="#dbbadb" stroke-width="1.35" stroke-dasharray="3 1.7" stroke-linejoin="round"/>
<polyline points="921,712.5 960,695 1007.7,673 1011.4,660.2 1020.6,658.3 1029.7,663.9 1033.4,673 1060.9,676.7 1059.1,682.2 1049.9,691.4 1051.7,713.4 1062.8,735.4 1073.8,746.4 1077.4,759.3 1088.4,762.9 1106.8,759.3 1125.1,764.8 1143.5,764.8 1161.8,759.3 1171,753.8 1180.2,748.3" fill="none" stroke="#dbbadb" stroke-width="1.35" stroke-dasharray="3 1.7" stroke-linejoin="round"/>
<polyline points="1152.7,735.4 1171,717.1 1198.5,728.1 1220,731.7" fill="none" stroke="#dbbadb" stroke-width="1.35" stroke-dasharray="3 1.7" stroke-linejoin="round"/>
<polyline points="1152.7,735.4 1158.2,742.8 1171,750.1 1176.5,768.4 1180.2,783.1 1191.2,790.5 1194.8,805.1 1205.9,820" fill="none" stroke="#dbbadb" stroke-width="1.35" stroke-dasharray="3 1.7" stroke-linejoin="round"/>
<polyline points="1088.4,762.9 1070.1,772.1 1062.8,777.6 1046.2,774 1037.1,783.1 1038.9,796 1044.4,805.1 1046.2,820 1043.5,836" fill="none" stroke="#dbbadb" stroke-width="1.35" stroke-dasharray="3 1.7" stroke-linejoin="round"/>
<polyline points="1125.1,764.8 1117.8,779.4 1112.3,796 1112.3,820" fill="none" stroke="#dbbadb" stroke-width="1.35" stroke-dasharray="3 1.7" stroke-linejoin="round"/>
<polyline points="1001,570 1026,585 1043.5,597.5 1061,615 1081,637.5 1104,650" fill="none" stroke="#dbbadb" stroke-width="1.35" stroke-dasharray="3 1.7" stroke-linejoin="round"/>
<polyline points="1096,555 1096,570" fill="none" stroke="#dbbadb" stroke-width="1.35" stroke-dasharray="3 1.7" stroke-linejoin="round"/>
<polyline points="736,565 746,565" fill="none" stroke="#dbbadb" stroke-width="1.35" stroke-dasharray="3 1.7" stroke-linejoin="round"/>
<polyline points="758.5,655 791,650" fill="none" stroke="#dbbadb" stroke-width="1.35" stroke-dasharray="3 1.7" stroke-linejoin="round"/>
<polyline points="736,670 746,675 756,670 758.5,655" fill="none" stroke="#dbbadb" stroke-width="1.35" stroke-dasharray="3 1.7" stroke-linejoin="round"/>
<polyline points="781,732.5 816,732.5" fill="none" stroke="#dbbadb" stroke-width="1.35" stroke-dasharray="3 1.7" stroke-linejoin="round"/>
<polyline points="781,732.5 783.5,765 753.5,770 736,772" fill="none" stroke="#dbbadb" stroke-width="1.35" stroke-dasharray="3 1.7" stroke-linejoin="round"/>
<polyline points="918.5,772.5 931,775 941,785" fill="none" stroke="#dbbadb" stroke-width="1.35" stroke-dasharray="3 1.7" stroke-linejoin="round"/>
<polyline points="1299,540 1299,547.5 1309,555 1299,565 1294,570" fill="none" stroke="#dbbadb" stroke-width="1.35" stroke-dasharray="3 1.7" stroke-linejoin="round"/>
<polyline points="1301.5,577.5 1329,580 1331.5,600 1324,605 1331.5,620 1324,627.5 1324,647.5" fill="none" stroke="#dbbadb" stroke-width="1.35" stroke-dasharray="3 1.7" stroke-linejoin="round"/>
<polyline points="1286.5,650 1316.5,650 1324,662.5" fill="none" stroke="#dbbadb" stroke-width="1.35" stroke-dasharray="3 1.7" stroke-linejoin="round"/>
<polyline points="1286.5,650 1284,725 1319,722.5 1344,712.5 1356.5,695 1359,672.5 1366.5,645 1364,637.5 1334,645" fill="none" stroke="#dbbadb" stroke-width="1.35" stroke-dasharray="3 1.7" stroke-linejoin="round"/>
<polyline points="1366.5,645 1391.5,647.5 1404,655 1404,670 1424,665 1431.5,660" fill="none" stroke="#dbbadb" stroke-width="1.35" stroke-dasharray="3 1.7" stroke-linejoin="round"/>
<polyline points="1444,665 1454,660 1472,665" fill="none" stroke="#dbbadb" stroke-width="1.35" stroke-dasharray="3 1.7" stroke-linejoin="round"/>
<polyline points="1449,622.5 1459,625 1459,647.5 1454,660" fill="none" stroke="#dbbadb" stroke-width="1.35" stroke-dasharray="3 1.7" stroke-linejoin="round"/>
<polyline points="1454,560 1456.5,597.5 1449,617.5" fill="none" stroke="#dbbadb" stroke-width="1.35" stroke-dasharray="3 1.7" stroke-linejoin="round"/>
<polyline points="1464,540 1464,555 1472,555" fill="none" stroke="#dbbadb" stroke-width="1.35" stroke-dasharray="3 1.7" stroke-linejoin="round"/>
<polyline points="1229,700 1224,720 1220,731.7" fill="none" stroke="#dbbadb" stroke-width="1.35" stroke-dasharray="3 1.7" stroke-linejoin="round"/>
<polyline points="1299,727.5 1301.5,752.5 1304,777.5" fill="none" stroke="#dbbadb" stroke-width="1.35" stroke-dasharray="3 1.7" stroke-linejoin="round"/>
<polyline points="1429,765 1441.5,752.5 1472,760" fill="none" stroke="#dbbadb" stroke-width="1.35" stroke-dasharray="3 1.7" stroke-linejoin="round"/>
<polyline points="1104,550 1114,555 1111.5,562.5" fill="none" stroke="#dbbadb" stroke-width="1.35" stroke-dasharray="3 1.7" stroke-linejoin="round"/>
<polyline points="1229,540 1239,547.5" fill="none" stroke="#dbbadb" stroke-width="1.35" stroke-dasharray="3 1.7" stroke-linejoin="round"/>
<polyline points="25,783.5 50,786 70,788.5 100,788.5 110,798.5 117.5,791 150,791" fill="none" stroke="#dbbadb" stroke-width="1.35" stroke-dasharray="3 1.7" stroke-linejoin="round"/>
<polyline points="180,736 180,751 165,761 152.5,786 150,793.5" fill="none" stroke="#dbbadb" stroke-width="1.35" stroke-dasharray="3 1.7" stroke-linejoin="round"/>
<polyline points="300,736 305,753.5" fill="none" stroke="#dbbadb" stroke-width="1.35" stroke-dasharray="3 1.7" stroke-linejoin="round"/>
<polyline points="175,851 195,851 210,866 215,873.5 195,886 185,893.5 185,911 197.5,926 212.5,936 215,956 220,981" fill="none" stroke="#dbbadb" stroke-width="1.35" stroke-dasharray="3 1.7" stroke-linejoin="round"/>
<polyline points="345,831 340,848.5 325,866 327.5,891 300,898.5 290,911 290,931 250,926 220,928.5" fill="none" stroke="#dbbadb" stroke-width="1.35" stroke-dasharray="3 1.7" stroke-linejoin="round"/>
<polyline points="327.5,891 337.5,911 350,926 357.5,936 355,961 360,981" fill="none" stroke="#dbbadb" stroke-width="1.35" stroke-dasharray="3 1.7" stroke-linejoin="round"/>
<polyline points="32.5,911 50,926 82.5,923.5 112.5,916 120,901 150,903.5 175,891 185,893.5" fill="none" stroke="#dbbadb" stroke-width="1.35" stroke-dasharray="3 1.7" stroke-linejoin="round"/>
<polyline points="82.5,923.5 87.5,943.5 95,961 105,973.5 120,971 125,981" fill="none" stroke="#dbbadb" stroke-width="1.35" stroke-dasharray="3 1.7" stroke-linejoin="round"/>
<polyline points="555.5,736 568,756 573,766 575.5,751 588,738.5" fill="none" stroke="#dbbadb" stroke-width="1.35" stroke-dasharray="3 1.7" stroke-linejoin="round"/>
<polyline points="643,748.5 673,736" fill="none" stroke="#dbbadb" stroke-width="1.35" stroke-dasharray="3 1.7" stroke-linejoin="round"/>
<polyline points="475.5,816 500.5,818.5 518,826 530.5,818.5 543,803.5 550.5,816 580.5,811 608,811 618,823.5 643,831 645.5,841 668,841 693,841" fill="none" stroke="#dbbadb" stroke-width="1.35" stroke-dasharray="3 1.7" stroke-linejoin="round"/>
<polyline points="675.5,943.5 700.5,953.5" fill="none" stroke="#dbbadb" stroke-width="1.35" stroke-dasharray="3 1.7" stroke-linejoin="round"/>
<polyline points="818.5,801 836,798.5 861,808.5 886,816 891,801 911,798.5" fill="none" stroke="#dbbadb" stroke-width="1.35" stroke-dasharray="3 1.7" stroke-linejoin="round"/>
<polyline points="821,816 836,843.5 848.5,866 886,863.5 896,858.5 891,846 891,816" fill="none" stroke="#dbbadb" stroke-width="1.35" stroke-dasharray="3 1.7" stroke-linejoin="round"/>
<polyline points="856,866 853.5,886 851,916 851,936" fill="none" stroke="#dbbadb" stroke-width="1.35" stroke-dasharray="3 1.7" stroke-linejoin="round"/>
<polyline points="886,863.5 891,886" fill="none" stroke="#dbbadb" stroke-width="1.35" stroke-dasharray="3 1.7" stroke-linejoin="round"/>
<polyline points="898.5,858.5 906,886" fill="none" stroke="#dbbadb" stroke-width="1.35" stroke-dasharray="3 1.7" stroke-linejoin="round"/>
<polyline points="736,874.75 761,873.5 786,881 796,872.25 811,871" fill="none" stroke="#dbbadb" stroke-width="1.35" stroke-dasharray="3 1.7" stroke-linejoin="round"/>
<polyline points="736,898.5 746,886" fill="none" stroke="#dbbadb" stroke-width="1.35" stroke-dasharray="3 1.7" stroke-linejoin="round"/>
<polyline points="918.5,776 931,771 941,786 941,806 946,816 956,823.5 968.5,828.5 981,816 993.5,821 1011,816 1036,813.5" fill="none" stroke="#dbbadb" stroke-width="1.35" stroke-dasharray="3 1.7" stroke-linejoin="round"/>
<polyline points="1036,781 1043.5,798.5 1046,818.5 1041,836 1036,848.5 1048.5,851 1061,856 1081,858.5 1104,856" fill="none" stroke="#dbbadb" stroke-width="1.35" stroke-dasharray="3 1.7" stroke-linejoin="round"/>
<polyline points="1011,853.5 1036,848.5" fill="none" stroke="#dbbadb" stroke-width="1.35" stroke-dasharray="3 1.7" stroke-linejoin="round"/>
<polyline points="1081,858.5 1081,876 1066,886 1071,906 1086,918.5" fill="none" stroke="#dbbadb" stroke-width="1.35" stroke-dasharray="3 1.7" stroke-linejoin="round"/>
<polyline points="1179,768.5 1179,786 1191.5,791 1186.5,798.5 1209,811 1204,836 1199,856 1194,873.5 1179,886 1169,871 1154,868.5 1134,876" fill="none" stroke="#dbbadb" stroke-width="1.35" stroke-dasharray="3 1.7" stroke-linejoin="round"/>
<polyline points="1209,811 1229,806 1244,821 1264,833.5 1276.5,831" fill="none" stroke="#dbbadb" stroke-width="1.35" stroke-dasharray="3 1.7" stroke-linejoin="round"/>
<polyline points="1364,766 1374,798.5 1381.5,821 1374,841" fill="none" stroke="#dbbadb" stroke-width="1.35" stroke-dasharray="3 1.7" stroke-linejoin="round"/>
<polyline points="1289,886 1299,873.5 1329,861 1344,851 1356.5,856 1369,871 1384,876 1381.5,891 1391.5,901 1416.5,881 1431.5,883.5 1449,873.5 1472,868.5" fill="none" stroke="#dbbadb" stroke-width="1.35" stroke-dasharray="3 1.7" stroke-linejoin="round"/>
<polyline points="1289,886 1309,891 1316.5,906 1309,916 1319,936 1334,946 1354,951 1366.5,956" fill="none" stroke="#dbbadb" stroke-width="1.35" stroke-dasharray="3 1.7" stroke-linejoin="round"/>
<polyline points="1219,916 1249,908.5 1279,901" fill="none" stroke="#dbbadb" stroke-width="1.35" stroke-dasharray="3 1.7" stroke-linejoin="round"/>
<polyline points="1369,891 1374,923.5 1366.5,956" fill="none" stroke="#dbbadb" stroke-width="1.35" stroke-dasharray="3 1.7" stroke-linejoin="round"/>
<polyline points="1424,893.5 1436.5,911 1429,936 1419,948.5" fill="none" stroke="#dbbadb" stroke-width="1.35" stroke-dasharray="3 1.7" stroke-linejoin="round"/>
<polyline points="1129,886 1124,923.5 1141.5,941 1151.5,951" fill="none" stroke="#dbbadb" stroke-width="1.35" stroke-dasharray="3 1.7" stroke-linejoin="round"/>
<polyline points="1224,931 1234,948.5 1224,968.5" fill="none" stroke="#dbbadb" stroke-width="1.35" stroke-dasharray="3 1.7" stroke-linejoin="round"/>
<polyline points="1449,55 1472,50" fill="none" stroke="#dbbadb" stroke-width="1.35" stroke-dasharray="3 1.7" stroke-linejoin="round"/>
<ellipse cx="860" cy="256" rx="11" ry="7.5" fill="none" stroke="#dbbadb" stroke-width="1.35" stroke-dasharray="3 1.7"/>
<polyline points="0,69.5 167.5,69.5 171,50" fill="none" stroke="#d4a9d4" stroke-width="2.5" stroke-linejoin="round" stroke-linecap="round"/>
<polyline points="272,292 282,275 306,257.5 312,262.5 335,275 355,282.5 357.5,276 368,276 370.5,277.5 370.5,237.5 383,240 393,245 405.5,242.5 403,225 408,205 443,182.5 478,196 485.5,192.5 488,165 513,164 548,142.5 570.5,136 603,109 628,109 631.75,116 645.5,110 688,117.5 718,117 736,121 756,117.5 788.5,90 911,83.75 943.5,83.75 943.5,76.25 986,82.5 991,77.5 991,70 1006,55 1021,50" fill="none" stroke="#d4a9d4" stroke-width="2.5" stroke-linejoin="round" stroke-linecap="round"/>
<polyline points="688,117.5 688,132.5 683,162.5 703,205 720.5,227.5 724,240 736,240 738.5,242.5 751,247.5 761,257.5 773.5,267.5 783.5,270 778.5,272.5 758.5,270 758.5,295 756,302.5 773.5,303.75 811,340 838.5,341.25 843.5,331.25 861,330 871,342.5 873.5,357.5 856,362.5 888.5,402.5 886,407.5 878.5,425 851,451.25 813.5,452.5 808.5,446.25 796,446.25 788.5,460 773.5,467.5 768.5,480 756,482.5 751,490 736,490 718,492.5 713,495 708,487.5 653,477.5 643,475 633,485 618,490 613,497.5 603,490 588,492.5 585.5,490 568,490 538,488.75 520.5,487.5 518,488.75 410.5,490 408,502.5 403,515 404,540 413,550 410.5,560 418,585 414.25,607.5 418,625 423,635 423,647.5 415.5,670 430.5,690 435.5,710 440.5,745 430.5,757 420,770 410,785 405.5,798.5 400.5,818.5 398,836 388,853.5 375.5,873.5 370.5,896 378,916 388,943.5 393,961 395.5,981" fill="none" stroke="#d4a9d4" stroke-width="2.5" stroke-linejoin="round" stroke-linecap="round"/>
<polyline points="272,292 275,295 282.5,305 285,327.5 275,331 260,331 270,347.5 265,357.5 262.5,367.5 250,382.5 240,395 215,397.5 195,405 185,412.5 175,413.75 187.5,417.5 195,445 185,470 170,485 172.5,507.5 167.5,540 165,542.5 157.5,540 135,547.5 130,557.5 122.5,565 105,562.5 102.5,555 105,540 105,527.5 102.5,515 85,517.5 82.5,527.5 62.5,522.5 60,540 60,550 32.5,555 30,567.5 25,565 15,557.5 0,558.75" fill="none" stroke="#d4a9d4" stroke-width="2.5" stroke-linejoin="round" stroke-linecap="round"/>
<polyline points="165,542.5 177.5,555 200,555 205,567.5 215,587.5 220,595 232.5,600 240,610 255,607.5 260,615 270,620 277.5,605 290,597.5 312.5,592.5 337.5,587.5 367.5,592.5 378,590 390.5,607.5 403,622.5 418,637.5" fill="none" stroke="#d4a9d4" stroke-width="2.5" stroke-linejoin="round" stroke-linecap="round"/>
<polyline points="886,402.5 883.5,375 916,368.75 926,360 961,392.5 966,400 976,410 991,412.5 996,425 1001,420 998.5,405 998.5,382.5 1001,347.5 1011,340 1033.5,322.5 1044,295 1046,260 1053.5,260 1078.5,237.5 1104,233.75 1114,232.5 1119,235 1141.5,233.75 1154,227.5 1176.5,225 1226.5,242.5 1242.75,240 1260,238" fill="none" stroke="#d4a9d4" stroke-width="2.5" stroke-linejoin="round" stroke-linecap="round"/>
<polyline points="996,425 991,437.5 986,465 1006,480 1008.5,495 1011,515 1018.5,538 1013,545 998,548 993.5,557.5 1001,567.5 996,582.5 991,590 976,595 971,605 968.5,612.5 963.5,617.5 956,627.5 953.5,645 951,660 946,667.5 921,670 921,680 918.5,702.5 918.5,722.5 914.75,740 918.5,757.5 913.5,775 916,811 921,813.5 918.5,836 921,846 916,861 918.5,881 921,886 916,898.5 913.5,916" fill="none" stroke="#d4a9d4" stroke-width="2.5" stroke-linejoin="round" stroke-linecap="round"/>
<polyline points="751,490 748.5,500 741,520 736,540 738.5,545 761,560 791,582.5 791,625 796,635 798.5,647.5 811,662.5 816,675 816,715 818.5,725 816,735 818,785 816,858.5 811,861 811,883.5 818.5,891 826,898.5 831,923.5" fill="none" stroke="#d4a9d4" stroke-width="2.5" stroke-linejoin="round" stroke-linecap="round"/>
<polyline points="665,480 668,495 660.5,515 668,527.5 678,540 683,540 693,550 703,560 703,590 698,600 693,612.5 700.5,620 690.5,625 690.5,635 710.5,630 718,645 715.5,665 713,690 703,697.5 705.5,710 718,720 728,738 721,752 723,776 718,798.5 715.5,818.5 723,828.5 725.5,848.5 718,856 723,886 728,896 736,898.5 736,911 751,918.5 761,921 766,933.5 776,936" fill="none" stroke="#d4a9d4" stroke-width="2.5" stroke-linejoin="round" stroke-linecap="round"/>
<polyline points="768.5,981 778.5,958.5 818.5,946 911,933.5 1011,928.5 1061,933.5 1104,961 1116.5,981" fill="none" stroke="#c9a0cc" stroke-width="1.6"/>
<polyline points="816,928.5 818.5,946" fill="none" stroke="#c9a0cc" stroke-width="1.4"/>
<polyline points="913.5,916 916,933.5" fill="none" stroke="#c9a0cc" stroke-width="1.4"/>
<polyline points="1104,966 1116.5,981" fill="none" stroke="#c9a0cc" stroke-width="1.4"/>
<circle cx="287" cy="165" r="2.2" fill="#fff" stroke="#666" stroke-width="0.9"/>
<circle cx="1147" cy="126.75" r="2.2" fill="#fff" stroke="#666" stroke-width="0.9"/>
<circle cx="1210" cy="203.75" r="2.2" fill="#fff" stroke="#666" stroke-width="0.9"/>
<circle cx="1146" cy="229.5" r="2.2" fill="#fff" stroke="#666" stroke-width="0.9"/>
<circle cx="171" cy="361.75" r="2.2" fill="#fff" stroke="#666" stroke-width="0.9"/>
<circle cx="150.75" cy="460.75" r="2.7" fill="#fff" stroke="#555" stroke-width="1"/>
<circle cx="686.75" cy="503.75" r="2.2" fill="#fff" stroke="#666" stroke-width="0.9"/>
<circle cx="737" cy="209" r="2.2" fill="#fff" stroke="#666" stroke-width="0.9"/>
<circle cx="859.75" cy="255" r="3.6" fill="#fff" stroke="#444" stroke-width="1.1"/><circle cx="859.75" cy="255" r="1.5" fill="#333"/>
<circle cx="958.5" cy="299.5" r="2.2" fill="#fff" stroke="#666" stroke-width="0.9"/>
<circle cx="975.5" cy="410.75" r="2.2" fill="#fff" stroke="#666" stroke-width="0.9"/>
<circle cx="890.25" cy="463" r="2.2" fill="#fff" stroke="#666" stroke-width="0.9"/>
<circle cx="934.75" cy="478.75" r="2.2" fill="#fff" stroke="#666" stroke-width="0.9"/>
<circle cx="1344.75" cy="534.5" r="2.2" fill="#fff" stroke="#666" stroke-width="0.9"/>
<circle cx="440" cy="577" r="2.2" fill="#fff" stroke="#666" stroke-width="0.9"/>
<circle cx="711" cy="550" r="2.2" fill="#fff" stroke="#666" stroke-width="0.9"/>
<circle cx="793.75" cy="554.5" r="2.2" fill="#fff" stroke="#666" stroke-width="0.9"/>
<circle cx="911" cy="561.75" r="2.2" fill="#fff" stroke="#666" stroke-width="0.9"/>
<circle cx="959.75" cy="588.75" r="2.2" fill="#fff" stroke="#666" stroke-width="0.9"/>
<circle cx="820" cy="609.75" r="2.2" fill="#fff" stroke="#666" stroke-width="0.9"/>
<circle cx="906.75" cy="643.75" r="2.2" fill="#fff" stroke="#666" stroke-width="0.9"/>
<circle cx="771.75" cy="677" r="2.2" fill="#fff" stroke="#666" stroke-width="0.9"/>
<circle cx="820" cy="675" r="2.2" fill="#fff" stroke="#666" stroke-width="0.9"/>
<circle cx="904" cy="685.75" r="2.2" fill="#fff" stroke="#666" stroke-width="0.9"/>
<circle cx="848" cy="773.75" r="2.2" fill="#fff" stroke="#666" stroke-width="0.9"/>
<circle cx="1082.25" cy="722" r="2.7" fill="#fff" stroke="#555" stroke-width="1"/>
<circle cx="1054.75" cy="754.5" r="2.7" fill="#fff" stroke="#555" stroke-width="1"/>
<circle cx="1264" cy="617.5" r="2.7" fill="#fff" stroke="#555" stroke-width="1"/>
<circle cx="1216" cy="667.75" r="2.2" fill="#fff" stroke="#666" stroke-width="0.9"/>
<circle cx="1349.75" cy="668.75" r="3.6" fill="#fff" stroke="#444" stroke-width="1.1"/><circle cx="1349.75" cy="668.75" r="1.5" fill="#333"/>
<circle cx="188" cy="876.75" r="3.6" fill="#fff" stroke="#444" stroke-width="1.1"/><circle cx="188" cy="876.75" r="1.5" fill="#333"/>
<circle cx="350" cy="883.5" r="2.2" fill="#fff" stroke="#666" stroke-width="0.9"/>
<circle cx="175" cy="915.5" r="2.2" fill="#fff" stroke="#666" stroke-width="0.9"/>
<circle cx="126" cy="938.5" r="2.2" fill="#fff" stroke="#666" stroke-width="0.9"/>
<circle cx="67.75" cy="970.5" r="2.2" fill="#fff" stroke="#666" stroke-width="0.9"/>
<circle cx="491.75" cy="806" r="2.2" fill="#fff" stroke="#666" stroke-width="0.9"/>
<circle cx="456" cy="828" r="2.2" fill="#fff" stroke="#666" stroke-width="0.9"/>
<circle cx="643.75" cy="940.5" r="2.2" fill="#fff" stroke="#666" stroke-width="0.9"/>
<circle cx="513.75" cy="930.5" r="2.2" fill="#fff" stroke="#666" stroke-width="0.9"/>
<circle cx="725.5" cy="866.5" r="2.2" fill="#fff" stroke="#666" stroke-width="0.9"/>
<circle cx="664.75" cy="978" r="2.2" fill="#fff" stroke="#666" stroke-width="0.9"/>
<circle cx="770" cy="809.75" r="2.2" fill="#fff" stroke="#666" stroke-width="0.9"/>
<circle cx="905" cy="825.5" r="2.2" fill="#fff" stroke="#666" stroke-width="0.9"/>
<circle cx="911" cy="861" r="2.2" fill="#fff" stroke="#666" stroke-width="0.9"/>
<circle cx="822.75" cy="863.75" r="2.2" fill="#fff" stroke="#666" stroke-width="0.9"/>
<circle cx="864" cy="890.25" r="2.2" fill="#fff" stroke="#666" stroke-width="0.9"/>
<circle cx="906.75" cy="905.25" r="3.6" fill="#fff" stroke="#444" stroke-width="1.1"/><circle cx="906.75" cy="905.25" r="1.5" fill="#333"/>
<circle cx="889" cy="916.75" r="2.7" fill="#fff" stroke="#555" stroke-width="1"/>
<circle cx="778.75" cy="938.5" r="3.6" fill="#fff" stroke="#444" stroke-width="1.1"/><circle cx="778.75" cy="938.5" r="1.5" fill="#333"/>
<circle cx="976.75" cy="909" r="2.7" fill="#fff" stroke="#555" stroke-width="1"/>
<circle cx="1024" cy="875.5" r="2.2" fill="#fff" stroke="#666" stroke-width="0.9"/>
<circle cx="1023" cy="825" r="2.7" fill="#fff" stroke="#555" stroke-width="1"/>
<circle cx="1026" cy="781.75" r="2.2" fill="#fff" stroke="#666" stroke-width="0.9"/>
<circle cx="1082.25" cy="788" r="2.2" fill="#fff" stroke="#666" stroke-width="0.9"/>
<circle cx="1196" cy="816.75" r="2.2" fill="#fff" stroke="#666" stroke-width="0.9"/>
<circle cx="1141" cy="836" r="2.7" fill="#fff" stroke="#555" stroke-width="1"/>
<circle cx="1177" cy="840.5" r="2.2" fill="#fff" stroke="#666" stroke-width="0.9"/>
<circle cx="1179.75" cy="919.75" r="2.7" fill="#fff" stroke="#555" stroke-width="1"/>
<circle cx="1184.75" cy="960.5" r="2.2" fill="#fff" stroke="#666" stroke-width="0.9"/>
<circle cx="1444.75" cy="791.75" r="2.7" fill="#fff" stroke="#555" stroke-width="1"/>
<circle cx="1407.75" cy="841.75" r="2.2" fill="#fff" stroke="#666" stroke-width="0.9"/>
</svg>
<span class="lb" style="left:273px;top:149.5px;font-size:11px;color:#333">Mopti</span>
<span class="lb" style="left:337px;top:137px;font-size:10.5px;font-style:italic;color:#80607f">Mopti</span>
<span class="lb" style="left:117px;top:221px;font-size:10.5px;font-style:italic;color:#80607f">Ségou</span>
<span class="lb" style="left:82px;top:248px;font-size:11px;color:#333">Ségou</span>
<span class="lb" style="left:1130px;top:127px;font-size:11px;color:#333">Tahoua</span>
<span class="lb" style="left:1188.5px;top:188px;font-size:11px;color:#333">Madaoua</span>
<span class="lb" style="left:1115px;top:214.5px;font-size:11px;color:#333">Birni N'Konni</span>
<span class="lb" style="left:152.5px;top:361.5px;font-size:11px;color:#333">Koutiala</span>
<span class="lb" style="left:130.5px;top:444px;font-size:12.4px;color:#333">Sikasso</span>
<span class="lb" style="left:27px;top:443px;font-size:10.5px;font-style:italic;color:#80607f">Sikasso</span>
<span class="lb" style="left:321px;top:332px;font-size:10.5px;font-style:italic;color:#80607f">Boucle du</span>
<span class="lb" style="left:321px;top:347px;font-size:10.5px;font-style:italic;color:#80607f">Mouhoun</span>
<span class="lb" style="left:265.75px;top:448.5px;font-size:10.5px;font-style:italic;color:#80607f">Hauts-Bassins</span>
<span class="lb" style="left:233px;top:476.5px;font-size:12.4px;color:#333">Bobo-Dioulasso</span>
<span class="lb" style="left:217px;top:523px;font-size:11px;color:#333">Banfora</span>
<span class="lb" style="left:575px;top:189px;font-size:10.5px;font-style:italic;color:#80607f">Sahel</span>
<span class="lb" style="left:451px;top:254px;font-size:10.5px;font-style:italic;color:#80607f">Nord</span>
<span class="lb" style="left:542px;top:271.5px;font-size:10.5px;font-style:italic;color:#80607f">Centre-Nord</span>
<span class="lb" style="left:727px;top:210px;font-size:11px;color:#333">Téra</span>
<span class="lb" style="left:536px;top:355.25px;font-size:13.6px;color:#74387a;letter-spacing:0.9px">Burkina</span>
<span class="lb" style="left:546px;top:372px;font-size:13.6px;color:#74387a;letter-spacing:0.9px">Faso</span>
<span class="lb" style="left:428.75px;top:409px;font-size:10.5px;font-style:italic;color:#80607f">Centre-Ouest</span>
<span class="lb" style="left:545.5px;top:429px;font-size:10.5px;font-style:italic;color:#80607f">Centre-Sud</span>
<span class="lb" style="left:630px;top:426.5px;font-size:10.5px;font-style:italic;color:#80607f">Centre-Est</span>
<span class="lb" style="left:755.5px;top:368.25px;font-size:10.5px;font-style:italic;color:#80607f">Est</span>
<span class="lb" style="left:570.5px;top:496px;font-size:10.5px;font-style:italic;color:#80607f">Upper East</span>
<span class="lb" style="left:580.5px;top:510.25px;font-size:10.5px;font-style:italic;color:#80607f">Region</span>
<span class="lb" style="left:665.5px;top:488.25px;font-size:11px;color:#333">Dapaong</span>
<span class="lb" style="left:681.25px;top:514.5px;font-size:10.5px;font-style:italic;color:#80607f">Région des</span>
<span class="lb" style="left:687px;top:528px;font-size:10.5px;font-style:italic;color:#80607f">Savanes</span>
<span class="lb" style="left:834.75px;top:185.25px;font-size:10.5px;font-style:italic;color:#80607f">Tillabéri</span>
<span class="lb" style="left:839.25px;top:259.5px;font-size:12.4px;color:#333">Niamey</span>
<span class="lb" style="left:961.5px;top:277.5px;font-size:10.5px;font-style:italic;color:#80607f">Dosso</span>
<span class="lb" style="left:944.75px;top:299px;font-size:11px;color:#333">Dosso</span>
<span class="lb" style="left:952.75px;top:395px;font-size:11px;color:#333">Malanville</span>
<span class="lb" style="left:1019.25px;top:416.5px;font-size:10.5px;font-style:italic;color:#80607f">Kebbi</span>
<span class="lb" style="left:838.5px;top:454.5px;font-size:11px;color:#333">Banikoara</span>
<span class="lb" style="left:906px;top:452px;font-size:10.5px;font-style:italic;color:#80607f">Alibori</span>
<span class="lb" style="left:922.25px;top:478.25px;font-size:11px;color:#333">Kandi</span>
<span class="lb" style="left:788.5px;top:511.25px;font-size:10.5px;font-style:italic;color:#80607f">Atakora</span>
<span class="lb" style="left:1144px;top:291.5px;font-size:10.5px;font-style:italic;color:#80607f">Sokoto</span>
<span class="lb" style="left:1193.25px;top:380.75px;font-size:10.5px;font-style:italic;color:#80607f">Zamfara</span>
<span class="lb" style="left:1323.5px;top:518.25px;font-size:11px;color:#333">Kaduna</span>
<span class="lb" style="left:225.75px;top:543.25px;font-size:10.5px;font-style:italic;color:#80607f">Cascades</span>
<span class="lb" style="left:144.25px;top:615.25px;font-size:10.5px;font-style:italic;color:#80607f">Savanes</span>
<span class="lb" style="left:0px;top:609px;font-size:10.5px;font-style:italic;color:#80607f">élé</span>
<span class="lb" style="left:24.25px;top:725.75px;font-size:10.5px;font-style:italic;color:#80607f">Woroba</span>
<span class="lb" style="left:192.5px;top:735px;font-size:10.5px;font-style:italic;color:#80607f">Vallée du Bandama</span>
<span class="lb" style="left:354px;top:697px;font-size:10.5px;font-style:italic;color:#80607f">Zanzan</span>
<span class="lb" style="left:442px;top:532px;font-size:10.5px;font-style:italic;color:#80607f">Upper West</span>
<span class="lb" style="left:453.75px;top:546.5px;font-size:10.5px;font-style:italic;color:#80607f">Region</span>
<span class="lb" style="left:432.5px;top:561.5px;font-size:11px;color:#333">Wa</span>
<span class="lb" style="left:530.5px;top:635.25px;font-size:10.5px;font-style:italic;color:#80607f">Northern Region</span>
<span class="lb" style="left:686.75px;top:550.25px;font-size:11px;color:#333">Sansanné-</span>
<span class="lb" style="left:695.5px;top:563.25px;font-size:11px;color:#333">Mango</span>
<span class="lb" style="left:548px;top:774px;font-size:13.6px;color:#74387a;letter-spacing:0.9px">Ghana</span>
<span class="lb" style="left:344px;top:531px;font-size:10.5px;font-style:italic;color:#80607f">Sud-Ouest</span>
<span class="lb" style="left:723px;top:606.25px;font-size:10.5px;font-style:italic;color:#80607f">Région de</span>
<span class="lb" style="left:730px;top:620px;font-size:10.5px;font-style:italic;color:#80607f">la Kara</span>
<span class="lb" style="left:769px;top:555.25px;font-size:11px;color:#333">Natitingou</span>
<span class="lb" style="left:884.75px;top:547px;font-size:11px;color:#333">Bembéréké</span>
<span class="lb" style="left:948.5px;top:573.25px;font-size:11px;color:#333">Nikki</span>
<span class="lb" style="left:896.75px;top:595.25px;font-size:10.5px;font-style:italic;color:#80607f">Borgou</span>
<span class="lb" style="left:859.25px;top:613.25px;font-size:13.6px;color:#74387a;letter-spacing:0.9px">Bénin</span>
<span class="lb" style="left:799.25px;top:612px;font-size:11px;color:#333">Djougou</span>
<span class="lb" style="left:806.75px;top:635.75px;font-size:10.5px;font-style:italic;color:#80607f">Donga</span>
<span class="lb" style="left:888px;top:643.75px;font-size:11px;color:#333">Parakou</span>
<span class="lb" style="left:755.25px;top:661.25px;font-size:11px;color:#333">Sokodé</span>
<span class="lb" style="left:803.5px;top:675px;font-size:11px;color:#333">Bassila</span>
<span class="lb" style="left:879.25px;top:670px;font-size:11px;color:#333">Tchaourou</span>
<span class="lb" style="left:757.75px;top:714.5px;font-size:13.6px;color:#74387a;letter-spacing:0.9px">Togo</span>
<span class="lb" style="left:848.5px;top:747.5px;font-size:10.5px;font-style:italic;color:#80607f">Collines</span>
<span class="lb" style="left:829.75px;top:773.5px;font-size:11px;color:#333">Savalou</span>
<span class="lb" style="left:988px;top:745.75px;font-size:10.5px;font-style:italic;color:#80607f">Oyo</span>
<span class="lb" style="left:1067.25px;top:704.5px;font-size:12.4px;color:#333">Ilorin</span>
<span class="lb" style="left:1019.75px;top:757.75px;font-size:12.4px;color:#333">Ogbomosho</span>
<span class="lb" style="left:1098px;top:670.25px;font-size:10.5px;font-style:italic;color:#80607f">Kwara</span>
<span class="lb" style="left:1366px;top:541.25px;font-size:10.5px;font-style:italic;color:#80607f">Kaduna</span>
<span class="lb" style="left:1166px;top:582.5px;font-size:10.5px;font-style:italic;color:#80607f">Niger</span>
<span class="lb" style="left:1246.5px;top:601.25px;font-size:12.4px;color:#333">Minna</span>
<span class="lb" style="left:1205.25px;top:667.75px;font-size:11px;color:#333">Bida</span>
<span class="lb" style="left:1334px;top:650.75px;font-size:12.4px;color:#333">Abuja</span>
<span class="lb" style="left:1388.25px;top:713.25px;font-size:10.5px;font-style:italic;color:#80607f">Nasarawa</span>
<span class="lb" style="left:1422.5px;top:774.5px;font-size:12.4px;color:#333">Makurdi</span>
<span class="lb" style="left:120px;top:802.5px;font-size:13.6px;color:#74387a;letter-spacing:0.9px">Côte d’Ivoire</span>
<span class="lb" style="left:70px;top:839.25px;font-size:10.5px;font-style:italic;color:#80607f">Sassandra-</span>
<span class="lb" style="left:72.5px;top:853.75px;font-size:10.5px;font-style:italic;color:#80607f">Marahoué</span>
<span class="lb" style="left:146.25px;top:857.5px;font-size:12.4px;color:#333">Yamoussoukro</span>
<span class="lb" style="left:254.5px;top:846.25px;font-size:10.5px;font-style:italic;color:#80607f">Lacs</span>
<span class="lb" style="left:320.5px;top:868.5px;font-size:11px;color:#333">Abengourou</span>
<span class="lb" style="left:160.5px;top:915.5px;font-size:11px;color:#333">Oumé</span>
<span class="lb" style="left:108px;top:923px;font-size:11px;color:#333">Gagnoa</span>
<span class="lb" style="left:123.25px;top:948.5px;font-size:10.5px;font-style:italic;color:#80607f">Gôh-Djiboua</span>
<span class="lb" style="left:51.25px;top:954.75px;font-size:11px;color:#333">Soubré</span>
<span class="lb" style="left:269.5px;top:958px;font-size:10.5px;font-style:italic;color:#80607f">Lagunes</span>
<span class="lb" style="left:356.25px;top:934.25px;font-size:10.5px;font-style:italic;color:#80607f">Comoé</span>
<span class="lb" style="left:469.25px;top:790px;font-size:11px;color:#333">Techiman</span>
<span class="lb" style="left:437.5px;top:828.5px;font-size:11px;color:#333">Sunyani</span>
<span class="lb" style="left:653px;top:800.5px;font-size:10.8px;font-style:italic;color:#5a84c0">Lake Volta</span>
<span class="lb" style="left:675.5px;top:831.25px;font-size:10.5px;font-style:italic;color:#80607f">Volta Region</span>
<span class="lb" style="left:493.5px;top:869.25px;font-size:10.5px;font-style:italic;color:#80607f">Ashanti Region</span>
<span class="lb" style="left:588px;top:906.25px;font-size:10.5px;font-style:italic;color:#80607f">Eastern Region</span>
<span class="lb" style="left:620.5px;top:925px;font-size:11px;color:#333">Koforidua</span>
<span class="lb" style="left:498px;top:931.75px;font-size:11px;color:#333">Obuasi</span>
<span class="lb" style="left:706.75px;top:867.5px;font-size:11px;color:#333">Kpalimé</span>
<span class="lb" style="left:410.5px;top:966.25px;font-size:10.5px;font-style:italic;color:#80607f">Western Region</span>
<span class="lb" style="left:642.25px;top:963px;font-size:11px;color:#333">Ashaiman</span>
<span class="lb" style="left:746.5px;top:794.75px;font-size:11px;color:#333">Atakpamé</span>
<span class="lb" style="left:891.5px;top:810.5px;font-size:11px;color:#333">Kétou</span>
<span class="lb" style="left:851.75px;top:826.25px;font-size:10.5px;font-style:italic;color:#80607f">Zou</span>
<span class="lb" style="left:899px;top:845px;font-size:11px;color:#333">Pobè</span>
<span class="lb" style="left:801px;top:864.25px;font-size:11px;color:#333">Aplahoué</span>
<span class="lb" style="left:831px;top:882.25px;font-size:11px;color:#333">Allada</span>
<span class="lb" style="left:875.25px;top:886px;font-size:12.4px;color:#333">Porto-Novo</span>
<span class="lb" style="left:864.75px;top:919.25px;font-size:12.4px;color:#333">Cotonou</span>
<span class="lb" style="left:763px;top:943px;font-size:12.4px;color:#333">Lomé</span>
<span class="lb" style="left:738.5px;top:897px;font-size:10.5px;font-style:italic;color:#80607f">Région Maritime</span>
<span class="lb" style="left:961px;top:892.25px;font-size:12.4px;color:#333">Lagos</span>
<span class="lb" style="left:1001px;top:878.5px;font-size:11px;color:#333">Ijebu-Ode</span>
<span class="lb" style="left:978px;top:852.25px;font-size:10.5px;font-style:italic;color:#80607f">Ogun</span>
<span class="lb" style="left:1006.75px;top:809.25px;font-size:11px;color:#333">Ibadan</span>
<span class="lb" style="left:1016.75px;top:782.5px;font-size:11px;color:#333">Oyo</span>
<span class="lb" style="left:1067.75px;top:800.5px;font-size:10.5px;font-style:italic;color:#80607f">Osun</span>
<span class="lb" style="left:1086.5px;top:780px;font-size:11px;color:#333">Osogbo</span>
<span class="lb" style="left:1142.25px;top:785.5px;font-size:10.5px;font-style:italic;color:#80607f">Ekiti</span>
<span class="lb" style="left:1171px;top:801.75px;font-size:11px;color:#333">Oka-Akoko</span>
<span class="lb" style="left:1124.5px;top:818.75px;font-size:12.4px;color:#333">Akure</span>
<span class="lb" style="left:1166px;top:841.25px;font-size:11px;color:#333">Owo</span>
<span class="lb" style="left:1126.5px;top:859px;font-size:10.5px;font-style:italic;color:#80607f">Ondo</span>
<span class="lb" style="left:1194.5px;top:885px;font-size:10.5px;font-style:italic;color:#80607f">Edo</span>
<span class="lb" style="left:1152px;top:922.5px;font-size:12.4px;color:#333">Benin City</span>
<span class="lb" style="left:1169.5px;top:944.75px;font-size:11px;color:#333">Sapele</span>
<span class="lb" style="left:1188.25px;top:968.75px;font-size:10.5px;font-style:italic;color:#80607f">Delta</span>
<span class="lb" style="left:1280.5px;top:784.25px;font-size:10.5px;font-style:italic;color:#80607f">Kogi</span>
<span class="lb" style="left:1390.75px;top:826.25px;font-size:11px;color:#333">Otukpo</span>
<span class="lb" style="left:1458.5px;top:820.5px;font-size:10.5px;font-style:italic;color:#80607f">Benue</span>
<span class="lb" style="left:1325.75px;top:894.75px;font-size:10.5px;font-style:italic;color:#80607f">Enugu</span>
<span class="lb" style="left:1279.75px;top:922.25px;font-size:10.5px;font-style:italic;color:#80607f">Anambra</span>
<span class="lb" style="left:1386px;top:919.25px;font-size:10.5px;font-style:italic;color:#80607f">Ebonyi</span>
<span class="lb" style="left:1409.5px;top:955px;font-size:10.5px;font-style:italic;color:#80607f">Cross River</span>
<span class="lb" style="left:1336px;top:190px;font-size:10.5px;font-style:italic;color:#80607f">Maradi</span>
<span class="lb" style="left:1369px;top:217px;font-size:11px;color:#333">Tessaoua</span>
<span class="lb" style="left:1297px;top:263px;font-size:11px;color:#333">Maradi</span>
<span class="lb" style="left:1362px;top:262px;font-size:11px;color:#333">Aguié</span>
<span class="lb" style="left:1336px;top:342px;font-size:10.5px;font-style:italic;color:#80607f">Katsina</span>
<span class="lb" style="left:1430px;top:381px;font-size:12.4px;color:#333">Kano</span>
<span class="lb" style="left:1430px;top:412px;font-size:10.5px;font-style:italic;color:#80607f">Kano</span>
<span class="lb" style="left:1358px;top:463px;font-size:11px;color:#333">Zaria</span>
<span class="lb" style="left:1455px;top:119px;font-size:11px;color:#333">Tao</span>
<div class="dot" style="left:375px;top:547.25px"></div>
<div class="dot" style="left:231px;top:519.75px"></div>
<div class="dot" style="left:273px;top:469.75px"></div>
<div class="dot" style="left:696.5px;top:387.75px"></div>
<div class="dot" style="left:524.75px;top:358.5px"></div>
<div class="dot" style="left:449px;top:369.75px"></div>
<div class="dot" style="left:566px;top:292px"></div>
<div class="dot" style="left:444px;top:246px"></div>
<div class="dot" style="left:661px;top:203.5px"></div>
<svg class="mk" style="left:665px;top:128px" width="18" height="18"><rect width="18" height="18" fill="#1aa3e8"/><g><use href="#hm"/></g></svg>
<svg class="mk" style="left:666px;top:167px" width="18" height="18"><rect width="18" height="18" fill="#fff000"/><g><use href="#hm"/></g></svg>
<svg class="mk" style="left:540px;top:168px" width="18" height="18"><rect width="18" height="18" fill="#fff000"/><g><use href="#hm"/></g></svg>
<svg class="mk" style="left:450px;top:239px" width="18" height="18"><rect width="18" height="18" fill="#fff000"/><g><use href="#hm"/></g></svg>
<svg class="mk" style="left:482px;top:257px" width="18" height="18"><rect width="18" height="18" fill="#c8101a"/><g transform="rotate(180 9 9)"><use href="#hm"/></g></svg>
<svg class="mk" style="left:477px;top:278px" width="18" height="18"><rect width="18" height="18" fill="#c8101a"/><g transform="rotate(180 9 9)"><use href="#hm"/></g></svg>
<svg class="mk" style="left:521px;top:281px" width="18" height="18"><rect width="18" height="18" fill="#fff000"/><g><use href="#hm"/></g></svg>
<svg class="mk" style="left:628px;top:247px" width="18" height="18"><rect width="18" height="18" fill="#fff000"/><g><use href="#hm"/></g></svg>
<svg class="mk" style="left:641px;top:242px" width="18" height="18"><rect width="18" height="18" fill="#fff000"/><g><use href="#hm"/></g></svg>
<svg class="mk" style="left:422px;top:354px" width="18" height="18"><rect width="18" height="18" fill="#11ee11"/><g><use href="#hm"/></g></svg>
<svg class="mk" style="left:407px;top:424px" width="18" height="18"><rect width="18" height="18" fill="#c8101a"/><g transform="rotate(180 9 9)"><use href="#hm"/></g></svg>
<svg class="mk" style="left:616px;top:472px" width="18" height="18"><rect width="18" height="18" fill="#fff000"/><g><use href="#hm"/></g></svg>
<svg class="mk" style="left:348px;top:390px" width="18" height="18"><rect width="18" height="18" fill="#fff000"/><g><use href="#hm"/></g></svg>
<svg class="mk" style="left:360px;top:407px" width="18" height="18"><rect width="18" height="18" fill="#fff000"/><g><use href="#hm"/></g></svg>
<svg class="mk" style="left:327px;top:437px" width="16" height="18"><path d="M8 1 L14.5 9 L8 17 L1.5 9Z" fill="#ffee00" stroke="#7a7a20" stroke-width="0.8"/></svg>
<svg class="mk" style="left:579px;top:366px" width="16" height="18"><path d="M8 1 L14.5 9 L8 17 L1.5 9Z" fill="#ffee00" stroke="#7a7a20" stroke-width="0.8"/></svg>
<svg class="mk" style="left:586.5px;top:372px" width="16" height="18"><path d="M8 1 L14.5 9 L8 17 L1.5 9Z" fill="#ffee00" stroke="#7a7a20" stroke-width="0.8"/></svg>
</div>
<div id="attr"><span style="color:#0078a8">Leaflet</span> | Map data © <span style="color:#0078a8">OpenStreetMap</span> contributors</div>
<div id="ctl"><div class="rb" style="top:11.5px"><div style="position:absolute;left:3px;top:3px;width:6px;height:6px;border-radius:50%;background:#666"></div></div>
<div class="lt" style="left:24px;top:9.5px">OpenStreetMap Base</div>
<div class="rb" style="top:38.5px"></div>
<div class="lt" style="left:24px;top:36.5px">OpenStreetMap Dark Matter</div>
<div class="rb" style="top:65.5px"></div>
<div class="lt" style="left:24px;top:63.5px">Landscape</div>
<div class="rb" style="top:92.5px"></div>
<div class="lt" style="left:24px;top:90.5px">Satellite Image</div>
<div style="position:absolute;left:0;top:113px;width:240px;height:1px;background:#ddd"></div>
<div class="cb" style="top:125.5px"><svg width="11" height="11" style="position:absolute;left:0;top:0"><path d="M2.5 5.5 L4.5 8 L9 2" stroke="#222" stroke-width="1.8" fill="none"/></svg></div>
<div class="ic" style="top:124.5px;background:#11ee11"><svg width="16" height="15" viewBox="0 0 18 17"><use href="#hm"/></svg></div>
<div class="lt" style="left:43px;top:123.5px">Zinc mines</div>
<div class="cb" style="top:152.5px"><svg width="11" height="11" style="position:absolute;left:0;top:0"><path d="M2.5 5.5 L4.5 8 L9 2" stroke="#222" stroke-width="1.8" fill="none"/></svg></div>
<div class="ic" style="top:151.5px;background:#1aa3e8"><svg width="16" height="15" viewBox="0 0 18 17"><use href="#hm"/></svg></div>
<div class="lt" style="left:43px;top:150.5px">Manganese mines</div>
<div class="cb" style="top:179.5px"><svg width="11" height="11" style="position:absolute;left:0;top:0"><path d="M2.5 5.5 L4.5 8 L9 2" stroke="#222" stroke-width="1.8" fill="none"/></svg></div>
<div class="ic" style="top:178.5px;background:#fff000"><svg width="16" height="15" viewBox="0 0 18 17"><use href="#hm"/></svg></div>
<div class="lt" style="left:43px;top:177.5px">Gold mines</div>
<div class="cb" style="top:206.5px"><svg width="11" height="11" style="position:absolute;left:0;top:0"><path d="M2.5 5.5 L4.5 8 L9 2" stroke="#222" stroke-width="1.8" fill="none"/></svg></div>
<div class="ic" style="top:205.5px;background:#b8101a"><svg width="16" height="15" viewBox="0 0 18 17"><g transform="rotate(180 9 8.5)"><use href="#hm"/></g></svg></div>
<div class="lt" style="left:43px;top:204.5px">Closed mines</div>
<div class="cb" style="top:233.5px"><svg width="11" height="11" style="position:absolute;left:0;top:0"><path d="M2.5 5.5 L4.5 8 L9 2" stroke="#222" stroke-width="1.8" fill="none"/></svg></div>
<svg style="position:absolute;left:24px;top:233px" width="16" height="16"><path d="M7.8 1.8 L14 8 L7.8 14.2 L1.6 8Z" fill="#ffee00" stroke="#444" stroke-width="0.9"/></svg>
<div class="lt" style="left:42px;top:231.5px">Gold mines under construction</div>
<div class="cb" style="top:260.5px"><svg width="11" height="11" style="position:absolute;left:0;top:0"><path d="M2.5 5.5 L4.5 8 L9 2" stroke="#222" stroke-width="1.8" fill="none"/></svg></div>
<div style="position:absolute;left:26px;top:262.5px;width:10px;height:10px;border-radius:50%;background:#000;box-shadow:0 0 2px 1px rgba(0,0,0,0.35)"></div>
<div class="lt" style="left:40px;top:259.5px">Cities</div>
<div class="cb" style="top:287.5px"></div>
<div style="position:absolute;left:24px;top:296.5px;width:16px;height:1px;background:#222"></div>
<div class="lt" style="left:43px;top:286px">Provinces</div>
<div class="cb" style="top:314px"></div>
<div style="position:absolute;left:24px;top:316px;width:15px;height:12px;background:#6f5a36"></div>
<div class="lt" style="left:42px;top:313.5px">Exploration permits (2013)</div>
<div class="cb" style="top:341px"></div>
<div class="lt" style="left:24px;top:340.75px">Geological structure</div>
<div style="position:absolute;left:24px;top:361px;width:15px;height:12px;background:#d2b48c"></div>
<div class="lt" style="left:42px;top:359px">Post birimian Cover</div>
<div style="position:absolute;left:24px;top:379px;width:15px;height:12px;background:#006400"></div>
<div class="lt" style="left:42px;top:377px">Birimian greenstone belts</div>
<div style="position:absolute;left:24px;top:397px;width:15px;height:12px;background:#cd5c5c"></div>
<div class="lt" style="left:42px;top:395px">Proterozoic granite rocks</div>
<div class="lt" style="left:7px;top:430.5px">all data as of June 2017</div></div>
</body></html>
